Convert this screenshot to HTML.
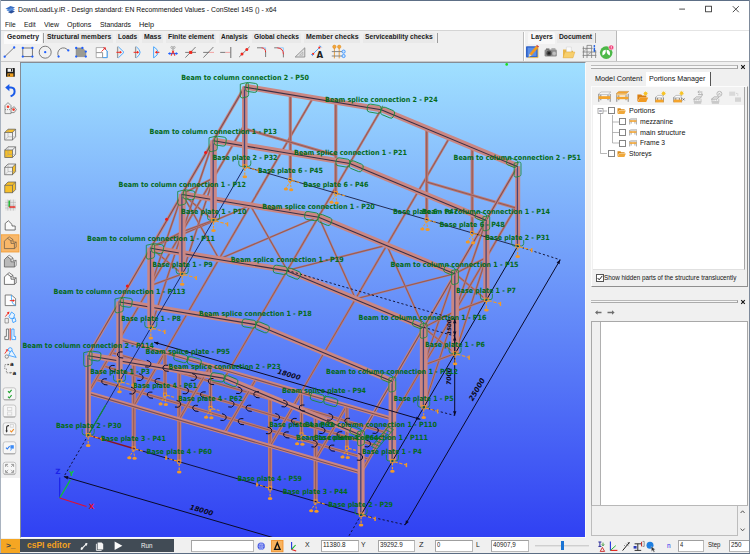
<!DOCTYPE html>
<html lang="en"><head><meta charset="utf-8"><title>ConSteel 14S</title>
<style>
html,body{margin:0;padding:0;background:#f0f0f0;}
body{width:750px;height:554px;overflow:hidden;font-family:"Liberation Sans",sans-serif;}
#app{position:relative;width:750px;height:554px;overflow:hidden;background:#f0f0f0;}
.a{position:absolute;box-sizing:border-box;}
.t{position:absolute;white-space:nowrap;transform-origin:0 50%;display:block;}
svg{position:absolute;display:block;overflow:visible;}
svg text{font-family:"DejaVu Sans","Liberation Sans",sans-serif;}
.inp{position:absolute;box-sizing:border-box;background:#fff;border:1px solid #b9b9b9;border-top-color:#9f9f9f;border-left-color:#a6a6a6;}
#scene{overflow:hidden;}

</style></head>
<body>
<div id="app">
<div class="a" style="left:0px;top:0px;width:750px;height:18px;background:#fff;"></div>
<div class="a" style="left:0px;top:18px;width:750px;height:13px;background:#fff;"></div>
<svg style="left:4.5px;top:5px" width="11" height="9" viewBox="0 0 11 9"><path d="M0.5 3.8 L5.5 1 L10 2.6 L5.2 5.4Z" fill="#3a6fc4"/><path d="M1.5 5.6 L6.2 3 L10 4.6 L5.6 7.2Z" fill="#5d93dd"/><path d="M3 7.2 L6.8 5.2 L10 6.4 L6.2 8.4Z" fill="#2a4f9a"/></svg>
<span class="t " style="left:17.9px;top:5.1px;font-size:7.5px;line-height:9.00px;color:#111;transform:scaleX(0.910);">DownLoadLy.iR - Design standard: EN Recommended Values - ConSteel 14S () - x64</span>
<svg style="left:675px;top:3px" width="70" height="12" viewBox="0 0 70 12"><g stroke="#222" stroke-width="0.8" fill="none"><path d="M4.2 6.1 H10"/><rect x="30.6" y="3.2" width="5.8" height="5.6"/><path d="M57.8 3.2 L63.8 9.2 M63.8 3.2 L57.8 9.2"/></g></svg>
<span class="t " style="left:4.8px;top:19.8px;font-size:7.5px;line-height:9.00px;color:#111;transform:scaleX(0.885);">File</span>
<span class="t " style="left:24.0px;top:19.8px;font-size:7.5px;line-height:9.00px;color:#111;transform:scaleX(0.890);">Edit</span>
<span class="t " style="left:44.0px;top:19.8px;font-size:7.5px;line-height:9.00px;color:#111;transform:scaleX(0.924);">View</span>
<span class="t " style="left:67.2px;top:19.8px;font-size:7.5px;line-height:9.00px;color:#111;transform:scaleX(0.940);">Options</span>
<span class="t " style="left:100.0px;top:19.8px;font-size:7.5px;line-height:9.00px;color:#111;transform:scaleX(0.907);">Standards</span>
<span class="t " style="left:139.0px;top:19.8px;font-size:7.5px;line-height:9.00px;color:#111;transform:scaleX(0.972);">Help</span>
<div class="a" style="left:0px;top:30px;width:617px;height:32px;background:#f0f0f0;border-top:1px solid #d4d4d4;border-bottom:1px solid #c8c8c8;"></div>
<div class="a" style="left:617px;top:30px;width:133px;height:32px;background:#fff;border-top:1px solid #e4e4e4;border-bottom:1px solid #c8c8c8;"></div>
<div class="a" style="left:4px;top:32px;width:37.5px;height:11.5px;background:#fafafa;border-radius:2px 2px 0 0;"></div>
<div class="a" style="left:44.7px;top:32.5px;width:68.3px;height:10.5px;background:#e9e9e9;border-radius:2px 2px 0 0;"></div>
<div class="a" style="left:116.3px;top:32.5px;width:23.000000000000014px;height:10.5px;background:#e9e9e9;border-radius:2px 2px 0 0;"></div>
<div class="a" style="left:142px;top:32.5px;width:21.30000000000001px;height:10.5px;background:#e9e9e9;border-radius:2px 2px 0 0;"></div>
<div class="a" style="left:165.7px;top:32.5px;width:50.0px;height:10.5px;background:#e9e9e9;border-radius:2px 2px 0 0;"></div>
<div class="a" style="left:218.7px;top:32.5px;width:30.600000000000023px;height:10.5px;background:#e9e9e9;border-radius:2px 2px 0 0;"></div>
<div class="a" style="left:252px;top:32.5px;width:49px;height:10.5px;background:#e9e9e9;border-radius:2px 2px 0 0;"></div>
<div class="a" style="left:303.7px;top:32.5px;width:56.60000000000002px;height:10.5px;background:#e9e9e9;border-radius:2px 2px 0 0;"></div>
<div class="a" style="left:363px;top:32.5px;width:71.69999999999999px;height:10.5px;background:#e9e9e9;border-radius:2px 2px 0 0;"></div>
<div class="a" style="left:527.6px;top:32px;width:27.299999999999955px;height:11.5px;background:#f8f8f8;border-radius:2px 2px 0 0;"></div>
<div class="a" style="left:556.6px;top:32.5px;width:37.0px;height:10.5px;background:#e9e9e9;border-radius:2px 2px 0 0;"></div>
<span class="t " style="left:7.3px;top:33.1px;font-size:7.3px;line-height:8.76px;color:#1a1a1a;font-weight:bold;transform:scaleX(0.939);">Geometry</span>
<span class="t " style="left:46.7px;top:33.1px;font-size:7.3px;line-height:8.76px;color:#1a1a1a;font-weight:bold;transform:scaleX(0.932);">Structural members</span>
<span class="t " style="left:118.3px;top:33.1px;font-size:7.3px;line-height:8.76px;color:#1a1a1a;font-weight:bold;transform:scaleX(0.884);">Loads</span>
<span class="t " style="left:144.0px;top:33.1px;font-size:7.3px;line-height:8.76px;color:#1a1a1a;font-weight:bold;transform:scaleX(0.947);">Mass</span>
<span class="t " style="left:167.7px;top:33.1px;font-size:7.3px;line-height:8.76px;color:#1a1a1a;font-weight:bold;transform:scaleX(0.937);">Finite element</span>
<span class="t " style="left:220.7px;top:33.1px;font-size:7.3px;line-height:8.76px;color:#1a1a1a;font-weight:bold;transform:scaleX(0.886);">Analysis</span>
<span class="t " style="left:254.0px;top:33.1px;font-size:7.3px;line-height:8.76px;color:#1a1a1a;font-weight:bold;transform:scaleX(0.909);">Global checks</span>
<span class="t " style="left:305.7px;top:33.1px;font-size:7.3px;line-height:8.76px;color:#1a1a1a;font-weight:bold;transform:scaleX(0.960);">Member checks</span>
<span class="t " style="left:365.0px;top:33.1px;font-size:7.3px;line-height:8.76px;color:#1a1a1a;font-weight:bold;transform:scaleX(0.917);">Serviceability checks</span>
<span class="t " style="left:530.6px;top:33.1px;font-size:7.3px;line-height:8.76px;color:#1a1a1a;font-weight:bold;transform:scaleX(0.926);">Layers</span>
<span class="t " style="left:558.6px;top:33.1px;font-size:7.3px;line-height:8.76px;color:#1a1a1a;font-weight:bold;transform:scaleX(0.925);">Document</span>
<div class="a" style="left:42.8px;top:33px;width:1px;height:10px;background:#9c9c9c;"></div>
<div class="a" style="left:436.7px;top:33px;width:1px;height:10px;background:#9c9c9c;"></div>
<div class="a" style="left:594.7px;top:33px;width:1px;height:10px;background:#9c9c9c;"></div>
<div class="a" style="left:522.5px;top:32px;width:1px;height:29px;background:#bdbdbd;"></div>
<div class="a" style="left:523.5px;top:32px;width:1px;height:29px;background:#fff;"></div>
<div class="a" style="left:616px;top:31px;width:1px;height:30px;background:#b9b9b9;"></div>
<svg style="left:0;top:44px" width="617" height="17" viewBox="0 44 617 17"><path d="M4.7 56.7 L14.2 47.5" stroke="#6f6f6f" stroke-width="0.9"/><circle cx="4.7" cy="56.7" r="1.15" fill="#1f5fff"/><circle cx="14.2" cy="47.5" r="1.15" fill="#1f5fff"/><rect x="22.8" y="48" width="9.6" height="8.6" fill="none" stroke="#6f6f6f" stroke-width="0.9"/><circle cx="22.8" cy="48" r="1.15" fill="#1f5fff"/><circle cx="32.4" cy="48" r="1.15" fill="#1f5fff"/><circle cx="22.8" cy="56.6" r="1.15" fill="#1f5fff"/><circle cx="32.4" cy="56.6" r="1.15" fill="#1f5fff"/><circle cx="45.2" cy="52.2" r="6" fill="none" stroke="#6f6f6f" stroke-width="0.9"/><circle cx="45.2" cy="52.2" r="1.15" fill="#1f5fff"/><path d="M58.6 56.4 A5.6 5.6 0 1 1 68.2 50.6" fill="none" stroke="#6f6f6f" stroke-width="0.9"/><circle cx="58.6" cy="56.6" r="1.15" fill="#1f5fff"/><circle cx="68.3" cy="50.4" r="1.15" fill="#1f5fff"/><path d="M76.2 48 H82.4 L85.8 51.4 V56.6 H76.2Z" fill="#9b9b92" stroke="#777" stroke-width="0.6"/><circle cx="76.2" cy="48" r="1.15" fill="#1f5fff"/><circle cx="82.4" cy="48" r="1.15" fill="#1f5fff"/><circle cx="85.8" cy="51.6" r="1.15" fill="#1f5fff"/><circle cx="76.2" cy="56.6" r="1.15" fill="#1f5fff"/><circle cx="85.8" cy="56.6" r="1.15" fill="#1f5fff"/><path d="M96.2 47.6 H103.5 L107.2 51 V57.6 H96.2Z" fill="#fff" stroke="#9a9a9a" stroke-width="0.8"/><path d="M103.5 47.6 L107.2 51 V57.6 H102.6" fill="none" stroke="#3aa0ff" stroke-width="0.9"/><path d="M96.2 52.6 H102.6 V57.6" fill="none" stroke="#8a8a8a" stroke-width="0.9"/><path d="M101.5 51.5 L105.2 48 M103.3 47.8 H105.4 V49.9" stroke="#f0281e" stroke-width="0.9" fill="none"/><path d="M117.6 46.6 V58" stroke="#9a9a9a" stroke-width="1.3"/><path d="M118.4 46.8 L124 52.3 L118.4 57.8" fill="none" stroke="#3aa0ff" stroke-width="0.9"/><path d="M116.4 52.3 H121" stroke="#f0281e" stroke-width="1"/><path d="M122 52.3 L119.8 50.8 V53.8Z" fill="#f0281e"/><path d="M135.6 46.6 V58" stroke="#9a9a9a" stroke-width="1.3"/><path d="M136.4 46.8 Q143.8 52.3 136.4 57.8" fill="none" stroke="#3aa0ff" stroke-width="0.9"/><path d="M133.6 52.3 H138" stroke="#f0281e" stroke-width="1"/><path d="M139.2 52.3 L137 50.8 V53.8Z" fill="#f0281e"/><path d="M153.6 46.6 V58 M153.8 46.8 Q162.4 52.3 153.8 57.8" fill="none" stroke="#3aa0ff" stroke-width="0.9"/><path d="M156.4 52.3 H159.4" stroke="#f0281e" stroke-width="1"/><path d="M154.8 52.3 L157 50.8 V53.8Z" fill="#f0281e"/><path d="M168.6 53.6 H177.4" stroke="#1f5fff" stroke-width="1.1"/><path d="M168 53.6 L170.2 52.1 V55.1Z M178 53.6 L175.8 52.1 V55.1Z" fill="#1f5fff"/><path d="M171.2 55.8 L173 50.6 L174.8 55.8" fill="none" stroke="#f0281e" stroke-width="1"/><circle cx="171.8" cy="47.4" r="1" fill="none" stroke="#8a8a8a" stroke-width="0.6"/><circle cx="174.2" cy="47.4" r="1" fill="none" stroke="#8a8a8a" stroke-width="0.6"/><path d="M172 48.2 L174 50.6 M174 48.2 L172 50.6" stroke="#8a8a8a" stroke-width="0.6"/><path d="M185.4 57.6 L195.6 47" stroke="#6f6f6f" stroke-width="0.9"/><path d="M185.2 52.4 H196" stroke="#6f6f6f" stroke-width="0.9"/><rect x="189.2" y="50.9" width="3" height="3" fill="#f0281e"/><path d="M203.4 57.6 L213.4 47" stroke="#6f6f6f" stroke-width="0.9"/><path d="M203.2 52.4 H209" stroke="#6f6f6f" stroke-width="0.9"/><path d="M209 52.4 H214" stroke="#f29a9a" stroke-width="0.9"/><path d="M220.2 52.4 H225.4" stroke="#6f6f6f" stroke-width="0.9"/><path d="M225.4 52.4 H230.4" stroke="#f29a9a" stroke-width="0.9"/><path d="M230.8 47 V58" stroke="#6f6f6f" stroke-width="1"/><path d="M239.2 57 L249.7 46.7" stroke="#6f6f6f" stroke-width="0.9"/><circle cx="242" cy="54" r="1.5" fill="#f0281e"/><circle cx="246.8" cy="49.4" r="1.5" fill="#f0281e"/><path d="M257 47.8 H261.6 M265.6 52 V57" stroke="#6f6f6f" stroke-width="0.9"/><path d="M261.6 47.8 H265.6 V52" fill="none" stroke="#7cc4ff" stroke-width="0.8"/><path d="M261.4 47.8 Q265.6 48 265.6 52.2" fill="none" stroke="#f0281e" stroke-width="1"/><path d="M274.2 47.8 H277.4 M283.4 54 V57.4" stroke="#6f6f6f" stroke-width="0.9"/><path d="M277.4 47.8 H283.4 V54" fill="none" stroke="#7cc4ff" stroke-width="0.8"/><path d="M277.2 47.8 Q283.4 48.2 283.4 54.2" fill="none" stroke="#f0281e" stroke-width="1"/><path d="M295.2 57 L304.8 47.8 V57Z" fill="#e4e4e4" stroke="#8a8a8a" stroke-width="0.9"/><path d="M299.6 55.2 L302.8 52 V55.2Z" fill="none" stroke="#9a9a9a" stroke-width="0.6"/><path d="M312 55 L320.6 46.4" stroke="#3aa0ff" stroke-width="0.9"/><path d="M311 54 L313 56 M319.6 45.4 L321.6 47.4" stroke="#3aa0ff" stroke-width="0.8"/><circle cx="313.2" cy="53.8" r="1.1" fill="#f0281e"/><circle cx="319.4" cy="47.6" r="1.1" fill="#f0281e"/><text x="316.6" y="58.2" font-size="8.6" font-weight="bold" fill="#222" font-family="Liberation Sans,sans-serif">A</text><path d="M334.4 48 V58.4 M339.2 48 V58.4" stroke="#e8962a" stroke-width="0.9"/><path d="M331.8 51.6 H342.4 M331.8 56 H342.4" stroke="#7a7a7a" stroke-width="0.9"/><circle cx="334.4" cy="46.8" r="1.7" fill="#f4a63a" stroke="#d9861a" stroke-width="0.5"/><circle cx="339.2" cy="46.8" r="1.7" fill="#f4a63a" stroke="#d9861a" stroke-width="0.5"/><circle cx="343.6" cy="51.6" r="1.6" fill="#cfe6ff" stroke="#2a8aff" stroke-width="0.8"/><circle cx="343.6" cy="56" r="1.6" fill="#cfe6ff" stroke="#2a8aff" stroke-width="0.8"/><rect x="526" y="46.2" width="12" height="11.4" rx="0.8" fill="#2f62c8"/><rect x="527.6" y="47.6" width="8.8" height="8.6" fill="#5b8fe6"/><path d="M528.2 57.6 H538 V48" stroke="#f2c24a" stroke-width="0.9" fill="none"/><path d="M536.2 45.8 L538.4 47.4 L531.6 55.6 L529.4 54Z" fill="#f39a1e"/><path d="M529.4 54 L531.6 55.6 L528.6 57Z" fill="#f6dcae"/><path d="M536.2 45.8 L538.4 47.4 L539 46.4 L537 45Z" fill="#d4342a"/><rect x="544.6" y="49.6" width="12.2" height="6.8" rx="1.2" fill="#8c8c8c"/><rect x="546" y="48.4" width="3.4" height="1.6" fill="#777"/><rect x="551.4" y="48.2" width="4" height="2" fill="#a5a5a5"/><circle cx="549" cy="53.2" r="2.6" fill="#4a4a4a"/><circle cx="549" cy="53.2" r="1.2" fill="#222"/><circle cx="554.2" cy="53.4" r="2" fill="#c2c2c2" stroke="#9a9a9a" stroke-width="0.5"/><path d="M563 49.6 H566.6 L567.6 50.8 H573 V57.6 H563Z" fill="#e8b64a"/><path d="M566.4 47 H571.4 V52 H566.4Z" fill="#fafafa" stroke="#c8c8c8" stroke-width="0.4"/><path d="M564.8 52 H574.8 L573 57.8 H563Z" fill="#f7cf6c" stroke="#e2a93a" stroke-width="0.5"/><g stroke="#7d7d7d" stroke-width="0.8" fill="none"><path d="M583.4 46.4 V58 M587 45.2 V58 M591.6 45.2 V58 M595.6 50 V58"/><path d="M582.6 48.4 H592.6 M582.6 52 H596.4 M582.6 55.4 H596.4 M587 45.4 H591.6"/><path d="M583.4 52 L587 48.4 M587 55.4 L591.6 52" stroke-width="0.6"/></g><rect x="593.6" y="47.6" width="1.5" height="4.2" fill="#1c5ee0"/><circle cx="594.35" cy="46" r="0.9" fill="#1c5ee0"/><circle cx="606.2" cy="52.6" r="6.3" fill="#4cb848"/><path d="M602.6 55.6 C601.8 51.6 603.2 50 605.8 49.8 C606 52.4 605.4 54.6 602.6 55.6Z M609.8 55.6 C610.6 51.6 609.2 50 606.6 49.8 C606.4 52.4 607 54.6 609.8 55.6Z" fill="#fff"/><circle cx="611.2" cy="47.4" r="2.5" fill="#f0407a" stroke="#fff" stroke-width="0.5"/><rect x="610.85" y="45.8" width="0.7" height="2.2" fill="#fff"/><rect x="610.85" y="48.4" width="0.7" height="0.7" fill="#fff"/></svg>
<div class="a" style="left:0px;top:62px;width:20px;height:416px;background:#f0f0f0;"></div>
<div class="a" style="left:0px;top:478px;width:20px;height:60px;background:#fff;border-left:1px solid #dcdcdc;"></div>
<svg style="left:0;top:62px" width="20" height="416" viewBox="0 62 20 416"><rect x="1" y="234.8" width="18" height="17.2" fill="#f8b769" stroke="#f39a2e" stroke-width="0.8"/><rect x="6" y="68" width="8.8" height="8.8" rx="0.6" fill="#1c1c1c"/><rect x="7.6" y="68.6" width="5.4" height="3.2" fill="#f4f4f4"/><rect x="11" y="69" width="1.2" height="2.4" fill="#1c1c1c"/><rect x="7.4" y="73.4" width="6" height="3.4" fill="#f0a020"/><rect x="8.4" y="74.4" width="1.6" height="1.4" fill="#1c1c1c"/><path d="M8.6 87.6 H11 Q14.6 87.8 14.6 91.4 Q14.6 95 10.6 96.2" fill="none" stroke="#1a5ae8" stroke-width="2"/><path d="M5.2 87.6 L9.4 84 V91.2Z" fill="#1a5ae8"/><g fill="none" stroke="#6a6a6a" stroke-width="0.7"><path d="M5 105.6 L8 102.6 L11 105.6 V113.6 H5Z M11 109 L14.2 106.6 L16.4 109.6 L14.2 112.6 H11"/><path d="M5 109.6 H11" stroke-dasharray="1 1"/></g><circle cx="8" cy="106.8" r="1.3" fill="#f03a2a"/><circle cx="13.6" cy="109.6" r="1.3" fill="#f03a2a"/><path d="M4.799999999999999 132.4 l3.2 -3.2 h7.6 l-3.2 3.2z" fill="#f6bf2a"/><g fill="none" stroke="#5a5a5a" stroke-width="0.7"><rect x="4.799999999999999" y="132.4" width="7.6" height="7.6"/><path d="M4.799999999999999 132.4 l3.2 -3.2 h7.6 v7.6 l-3.2 3.2 M12.399999999999999 132.4 l3.2 -3.2"/><path d="M7.999999999999999 129.20000000000002 v7.6 h7.6 M4.799999999999999 140.0 l3.2 -3.2" stroke="#9a9a9a" stroke-width="0.5"/></g><rect x="4.799999999999999" y="150.0" width="7.6" height="7.6" fill="#f6bf2a"/><g fill="none" stroke="#5a5a5a" stroke-width="0.7"><rect x="4.799999999999999" y="150.0" width="7.6" height="7.6"/><path d="M4.799999999999999 150.0 l3.2 -3.2 h7.6 v7.6 l-3.2 3.2 M12.399999999999999 150.0 l3.2 -3.2"/><path d="M7.999999999999999 146.8 v7.6 h7.6 M4.799999999999999 157.6 l3.2 -3.2" stroke="#9a9a9a" stroke-width="0.5"/></g><path d="M12.399999999999999 167.20000000000002 l3.2 -3.2 v7.6 l-3.2 3.2z" fill="#f6bf2a"/><g fill="none" stroke="#5a5a5a" stroke-width="0.7"><rect x="4.799999999999999" y="167.20000000000002" width="7.6" height="7.6"/><path d="M4.799999999999999 167.20000000000002 l3.2 -3.2 h7.6 v7.6 l-3.2 3.2 M12.399999999999999 167.20000000000002 l3.2 -3.2"/><path d="M7.999999999999999 164.00000000000003 v7.6 h7.6 M4.799999999999999 174.8 l3.2 -3.2" stroke="#9a9a9a" stroke-width="0.5"/></g><path d="M4.799999999999999 185.20000000000002 l3.2 -3.2 h7.6 l-3.2 3.2z" fill="#f6bf2a"/><rect x="4.799999999999999" y="185.20000000000002" width="7.6" height="7.6" fill="#f6bf2a"/><path d="M12.399999999999999 185.20000000000002 l3.2 -3.2 v7.6 l-3.2 3.2z" fill="#f6bf2a"/><g fill="none" stroke="#5a5a5a" stroke-width="0.7"><rect x="4.799999999999999" y="185.20000000000002" width="7.6" height="7.6"/><path d="M4.799999999999999 185.20000000000002 l3.2 -3.2 h7.6 v7.6 l-3.2 3.2 M12.399999999999999 185.20000000000002 l3.2 -3.2"/></g><rect x="5" y="199.6" width="11" height="11" fill="#e6e6e6"/><g stroke="#a9a9a9" stroke-width="0.5"><path d="M5 202.4 H16 M5 205.2 H16 M5 208 H16 M7.8 199.6 V210.6 M10.6 199.6 V210.6 M13.4 199.6 V210.6"/></g><path d="M9.2 200.4 V207" stroke="#12b428" stroke-width="1.4"/><path d="M9.2 207 H15.4" stroke="#e8221a" stroke-width="1.4"/><path d="M5.2 230 V223.4 L8.4 220.8 L12 224.4 V226 H15.2 V230Z" fill="#fafafa" stroke="#4a4a4a" stroke-width="0.75"/><path d="M4.3999999999999995 248.6 v-7.4 l3 -3 l3.6 2.8 v2.4 h3.4 v5.2z" fill="none" stroke="#6a5a48" stroke-width="0.75"/><path d="M7.3999999999999995 238.2 l1.8 -1.4 l3.8 2.8 v2.4 h3.2 v5.2 l-1.8 1.4 M11.0 241.0 l2 -1.4 M14.399999999999999 243.4 l1.8 -1.4" fill="none" stroke="#6a5a48" stroke-width="0.65"/><path d="M4.3999999999999995 267 v-7.4 l3 -3 l3.6 2.8 v2.4 h3.4 v5.2z" fill="#b9b9b9" stroke="#5a5a5a" stroke-width="0.75"/><path d="M7.3999999999999995 256.6 l1.8 -1.4 l3.8 2.8 v2.4 h3.2 v5.2 l-1.8 1.4 M11.0 259.4 l2 -1.4 M14.399999999999999 261.8 l1.8 -1.4" fill="none" stroke="#5a5a5a" stroke-width="0.65"/><path d="M4.3999999999999995 284.4 v-7.4 l3 -3 l3.6 2.8 v2.4 h3.4 v5.2z" fill="#fdfdfd" stroke="#4a4a4a" stroke-width="0.75"/><path d="M7.3999999999999995 274.0 l1.8 -1.4 l3.8 2.8 v2.4 h3.2 v5.2 l-1.8 1.4 M11.0 276.79999999999995 l2 -1.4 M14.399999999999999 279.2 l1.8 -1.4" fill="none" stroke="#4a4a4a" stroke-width="0.65"/><path d="M5.2 295 H11.4 L15.6 298.6 V305.6 H5.2Z" fill="#fdfdfd" stroke="#5a5a5a" stroke-width="0.75"/><path d="M11.4 295 V297.4 Q11.6 304.4 15.6 305.4" fill="none" stroke="#2aa0ff" stroke-width="0.8"/><path d="M9.8 300.6 H13.6" stroke="#f0281e" stroke-width="0.9"/><path d="M15 300.6 L12.8 299.2 V302Z" fill="#f0281e"/><path d="M5 323 V318.4 H8.4 V323Z" fill="none" stroke="#7a7a7a" stroke-width="0.7"/><path d="M9 316.6 L11.6 312 L14.6 314.4 L13.6 318.4 H10.4Z M12 319.4 L14.8 317.6 L16 321.2 L13 322.6Z" fill="#e8f4ff" stroke="#2a96ff" stroke-width="0.8"/><path d="M5.4 316.6 L8.6 312.6" stroke="#f0281e" stroke-width="0.9"/><path d="M9.4 311.6 L6.8 312.4 L8.8 314.4Z" fill="#f0281e"/><path d="M8.6 329 V339.6 H4.8 V336.4 H6.4 V329Z" fill="#f4f4f4" stroke="#5a5a5a" stroke-width="0.75"/><path d="M11.8 329 V339.6 H15.6 V336.4 H14 V329Z" fill="#eaf5ff" stroke="#2a96ff" stroke-width="0.8"/><path d="M10.2 328.2 V340.4" stroke="#f0381e" stroke-width="1"/><path d="M8.6 355.4 L11.4 349.8 L16.2 357.4Z" fill="#eaf5ff" stroke="#2a96ff" stroke-width="0.8"/><circle cx="10.2" cy="349.6" r="1.9" fill="#eaf5ff" stroke="#2a96ff" stroke-width="0.8"/><circle cx="6.8" cy="356.6" r="1.7" fill="#f4f4f4" stroke="#6a6a6a" stroke-width="0.7"/><path d="M4.8 353.6 L7.2 350.2" stroke="#f0281e" stroke-width="0.9"/><path d="M8 349 L5.6 349.8 L7.4 351.6Z" fill="#f0281e"/><path d="M4.8 369 V364.6 H8.4 M6.4 368.6 V372.8 H11" fill="none" stroke="#6a6a6a" stroke-width="0.7" stroke-dasharray="1.4 0.8"/><path d="M9.4 364.6 L7.8 363.6 V365.6Z M12 372.8 L10.4 371.8 V373.8Z" fill="#555"/><g font-family="Liberation Sans,sans-serif" font-size="5.6" font-weight="bold" fill="#222"><text x="10" y="366.4">a</text><text x="12.6" y="374.8">a</text></g><rect x="3.1999999999999993" y="387.8" width="12.6" height="12.4" rx="2.2" fill="#f6f6f6" stroke="#b9b9b9" stroke-width="0.8"/><path d="M4.0 399.6 h11 " stroke="#9d9d9d" stroke-width="0.8"/><path d="M8.0 391.2 l1.3 1.4 l2.3 -2.8" fill="none" stroke="#1ca02c" stroke-width="1.1"/><path d="M8.0 396.6 l1.3 1.4 l2.3 -2.8" fill="none" stroke="#1ca02c" stroke-width="1.1"/><rect x="3.1999999999999993" y="405.0" width="12.6" height="12.4" rx="2.2" fill="#f6f6f6" stroke="#b9b9b9" stroke-width="0.8"/><path d="M4.0 416.8 h11 " stroke="#9d9d9d" stroke-width="0.8"/><g fill="none" stroke="#d4d4d4" stroke-width="0.8"><rect x="7.4" y="407.4" width="4.4" height="3"/><rect x="7.4" y="412" width="4.4" height="3"/></g><rect x="3.1999999999999993" y="422.8" width="12.6" height="12.4" rx="2.2" fill="#f6f6f6" stroke="#b9b9b9" stroke-width="0.8"/><path d="M4.0 434.6 h11 " stroke="#9d9d9d" stroke-width="0.8"/><path d="M6.6 432 V427.6 Q6.8 425.4 9 425.6" fill="none" stroke="#333" stroke-width="1.1"/><path d="M5.4 430.6 L6.6 432.8 L7.8 430.6Z" fill="#333"/><rect x="10.2" y="424.6" width="3.2" height="2.6" fill="none" stroke="#cfcfcf" stroke-width="0.7"/><path d="M10.200000000000001 430.6 l1.3 1.4 l2.3 -2.8" fill="none" stroke="#f08a1e" stroke-width="1.1"/><rect x="3.1999999999999993" y="441.8" width="12.6" height="12.4" rx="2.2" fill="#f6f6f6" stroke="#b9b9b9" stroke-width="0.8"/><path d="M4.0 453.6 h11 " stroke="#9d9d9d" stroke-width="0.8"/><path d="M6.0 447.6 l1.3 1.4 l2.3 -2.8" fill="none" stroke="#2a7af0" stroke-width="1.1"/><rect x="10.4" y="445.2" width="3.4" height="3.4" fill="#3a8af6"/><path d="M10.6 450.6 l1 -2" stroke="#3a8af6" stroke-width="0.8"/><rect x="3.1999999999999993" y="462.2" width="12.6" height="12.4" rx="2.2" fill="#f6f6f6" stroke="#b9b9b9" stroke-width="0.8"/><path d="M4.0 474.0 h11 " stroke="#9d9d9d" stroke-width="0.8"/><g fill="none" stroke="#8d8d8d" stroke-width="0.9"><path d="M5.6 466.8 V464.4 H8 M11.2 464.4 H13.6 V466.8 M13.6 470 V472.4 H11.2 M8 472.4 H5.6 V470"/><path d="M5.8 464.6 L8.2 467 M13.4 464.6 L11 467 M13.4 472.2 L11 469.8 M5.8 472.2 L8.2 469.8" stroke-width="0.7"/></g></svg>
<div class="a" style="left:20px;top:62px;width:566px;height:476px;background:#fff;border-left:1px solid #868c94;border-top:1px solid #868c94;border-right:1px solid #fafafa;border-bottom:1px solid #fafafa;"></div>
<div class="a" style="left:586px;top:62px;width:164px;height:476px;background:#f0f0f0;"></div>
<div class="a" style="left:591px;top:65.2px;width:147px;height:3.6px;background:#f6f6f6;border-top:1px solid #b9b9b9;border-bottom:1px solid #ababab;border-right:1px solid #9a9a9a;"></div>
<svg style="left:740px;top:63.5px" width="6" height="6" viewBox="0 0 6 6"><path d="M1.2 1.2 L4.8 4.8 M4.8 1.2 L1.2 4.8" stroke="#111" stroke-width="1.1"/></svg>
<div class="a" style="left:646px;top:72px;width:65px;height:15px;background:#fff;border-right:1px solid #555;"></div>
<span class="t " style="left:594.8px;top:74.7px;font-size:6.9px;line-height:8.28px;color:#111;transform:scaleX(1.052);">Model Content</span>
<span class="t " style="left:648.5px;top:74.7px;font-size:6.9px;line-height:8.28px;color:#111;transform:scaleX(1.037);">Portions Manager</span>
<div class="a" style="left:591px;top:86px;width:157px;height:201px;background:#f0f0f0;border:1px solid #fcfcfc;border-right:1px solid #8f8f8f;border-bottom:1px solid #8f8f8f;"></div>
<div class="a" style="left:593px;top:87px;width:152px;height:183px;background:#fff;border-right:1px solid #a5a5a5;border-bottom:1px solid #e0e0e0;"></div>
<div class="a" style="left:593px;top:87px;width:151px;height:18.3px;background:#f2f2f2;"></div>
<svg style="left:593px;top:87px" width="152" height="18" viewBox="593 87 152 18"><path d="M598.8000000000001 101.8 V94.0 M610.2 101.8 V94.0 M600.8000000000001 100.2 V94.6 M608.0000000000001 100.2 V94.6" stroke="#7b7b7b" stroke-width="0.9" fill="none"/><path d="M598.2 94.39999999999999 L601.0 92.0 H610.8000000000001 L608.2 94.39999999999999Z" fill="#fbfbfb" stroke="#8e8e8e" stroke-width="0.5"/><rect x="598.6" y="96.19999999999999" width="11.799999999999999" height="2.8" fill="#f4a42c"/><path d="M616.8000000000001 101.80000000000001 V93.80000000000001 M628.2 101.80000000000001 V93.80000000000001 M618.8000000000001 100.20000000000002 V94.4 M626.0000000000001 100.20000000000002 V94.4" stroke="#7b7b7b" stroke-width="0.9" fill="none"/><path d="M616.2 93.60000000000001 L618.8000000000001 91.4 H628.8000000000001 L626.4000000000001 93.60000000000001Z" fill="#f4a42c" stroke="#c07a16" stroke-width="0.4"/><rect x="616.6" y="93.80000000000001" width="9.6" height="1.6" fill="#f9c978"/><rect x="616.6" y="96.80000000000001" width="11.799999999999999" height="2.4" fill="#f4a42c"/><path d="M637.4 94.4 H641.2 L642.2 95.6 H646.4 V97.4 H639.6 L637.4 101.8Z" fill="#d97f12"/><path d="M639.8 97.4 H648.2 L646.2 102 H637.6Z" fill="#f19a22"/><polygon points="648.30,93.60 646.85,94.12 647.51,95.51 646.12,94.85 645.60,96.30 645.08,94.85 643.69,95.51 644.35,94.12 642.90,93.60 644.35,93.08 643.69,91.69 645.08,92.35 645.60,90.90 646.12,92.35 647.51,91.69 646.85,93.08" fill="#f7c325"/><path d="M655.6 102.2 V97.4 M663.4 102.2 V97.4 M657.6 100.60000000000001 V98 M661.2 100.60000000000001 V98" stroke="#7b7b7b" stroke-width="0.9" fill="none"/><path d="M655 97.8 L657.8 95.4 H664 L661.4 97.8Z" fill="#fbfbfb" stroke="#8e8e8e" stroke-width="0.5"/><rect x="655.4" y="99.6" width="8.2" height="2.8" fill="#f4a42c"/><polygon points="666.30,93.40 664.85,93.92 665.51,95.31 664.12,94.65 663.60,96.10 663.08,94.65 661.69,95.31 662.35,93.92 660.90,93.40 662.35,92.88 661.69,91.49 663.08,92.15 663.60,90.70 664.12,92.15 665.51,91.49 664.85,92.88" fill="#f7c325"/><path d="M673.8000000000001 102.2 V97.4 M681.6 102.2 V97.4 M675.8000000000001 100.60000000000001 V98 M679.4000000000001 100.60000000000001 V98" stroke="#7b7b7b" stroke-width="0.9" fill="none"/><path d="M673.2 97.8 L676.0 95.4 H682.2 L679.6 97.8Z" fill="#fbfbfb" stroke="#8e8e8e" stroke-width="0.5"/><rect x="673.6" y="99.6" width="8.2" height="2.8" fill="#f4a42c"/><polygon points="684.30,93.20 682.85,93.72 683.51,95.11 682.12,94.45 681.60,95.90 681.08,94.45 679.69,95.11 680.35,93.72 678.90,93.20 680.35,92.68 679.69,91.29 681.08,91.95 681.60,90.50 682.12,91.95 683.51,91.29 682.85,92.68" fill="#f7c325"/><path d="M682.6 98.4 l2 2 m0 -2 l-2 2" stroke="#555" stroke-width="0.7"/><path d="M694.2 102.2 V98.80000000000001 M701.0 102.2 V98.80000000000001 M696.2 100.60000000000001 V99.4 M698.8000000000001 100.60000000000001 V99.4" stroke="#bdbdbd" stroke-width="0.9" fill="none"/><path d="M693.6 99.2 L696.4 96.80000000000001 H701.6 L699.0 99.2Z" fill="#e2e2e2" stroke="#8e8e8e" stroke-width="0.5"/><rect x="694.0" y="101.0" width="7.2" height="2.8" fill="#c9c9c9"/><path d="M698 94.6 h4.6 m-1.4 -1.6 l1.8 1.6 l-1.8 1.6 M702.4 92 h-4.4 m1.4 -1.4 l-1.6 1.4 l1.6 1.4" fill="none" stroke="#b4b4b4" stroke-width="1"/><path d="M712.0 102.2 V98.80000000000001 M718.8 102.2 V98.80000000000001 M714.0 100.60000000000001 V99.4 M716.6 100.60000000000001 V99.4" stroke="#bdbdbd" stroke-width="0.9" fill="none"/><path d="M711.4 99.2 L714.1999999999999 96.80000000000001 H719.4 L716.8 99.2Z" fill="#e2e2e2" stroke="#8e8e8e" stroke-width="0.5"/><rect x="711.8" y="101.0" width="7.2" height="2.8" fill="#c9c9c9"/><circle cx="719.4" cy="93.8" r="2.5" fill="#f4f4f4" stroke="#b4b4b4" stroke-width="0.9"/><path d="M718.2 92.6 l2.4 2.4 m0 -2.4 l-2.4 2.4" stroke="#b4b4b4" stroke-width="0.8"/><rect x="729.2" y="91.6" width="6" height="4.2" fill="#d9d9d9"/><rect x="735" y="97.4" width="6" height="4.4" fill="#d4d4d4"/><path d="M736.2 93.4 h1.6 v2.6" fill="none" stroke="#c2c2c2" stroke-width="0.8" stroke-dasharray="1 0.8"/></svg>
<svg style="left:593px;top:104px" width="60" height="56" viewBox="593 104 60 56"><g stroke="#9a9a9a" stroke-width="0.7" fill="none"><path d="M600.5 113.5 V153.5 H607 M602.5 111 H607 M612.5 115 V143 H620 M612.5 122 H620 M612.5 132.5 H620"/></g><rect x="598" y="108.5" width="5" height="5" fill="#fff" stroke="#8a8a8a" stroke-width="0.7"/><path d="M599.2 111 H601.8" stroke="#335" stroke-width="0.7"/></svg>
<div class="a" style="left:607.5px;top:107.4px;width:7px;height:7px;background:#fff;border:1px solid #858585;"></div>
<svg style="left:617.0px;top:107.4px" width="9" height="8" viewBox="0 0 9 8"><path d="M0.5 1.2 H3.4 L4.2 2.2 H7.6 V3.2 H2 L0.5 6.8Z" fill="#d98a1a"/><path d="M2.2 3.4 H8.8 L7.4 7 H0.6Z" fill="#f0a83a"/></svg>
<span class="t " style="left:628.7px;top:107.1px;font-size:6.9px;line-height:8.28px;color:#111;transform:scaleX(1.031);">Portions</span>
<div class="a" style="left:619px;top:118.2px;width:7px;height:7px;background:#fff;border:1px solid #858585;"></div>
<svg style="left:628.5px;top:118.39999999999999px" width="8.1" height="6.8" viewBox="0 0 13 11"><g fill="none" stroke="#7a7a7a" stroke-width="1"><path d="M1 10.5 V2 M12 10.5 V2 M3.5 9 V4 M9.5 9 V4"/></g><path d="M0.5 2.5 L3 0.8 H12.5 L10 2.5Z" fill="#e9e9e9" stroke="#8a8a8a" stroke-width="0.6"/><rect x="1" y="3.6" width="11" height="2.6" fill="#f2a532"/></svg>
<span class="t " style="left:640.0px;top:117.9px;font-size:6.9px;line-height:8.28px;color:#111;transform:scaleX(0.989);">mezzanine</span>
<div class="a" style="left:619px;top:128.9px;width:7px;height:7px;background:#fff;border:1px solid #858585;"></div>
<svg style="left:628.5px;top:129.1px" width="8.1" height="6.8" viewBox="0 0 13 11"><g fill="none" stroke="#7a7a7a" stroke-width="1"><path d="M1 10.5 V2 M12 10.5 V2 M3.5 9 V4 M9.5 9 V4"/></g><path d="M0.5 2.5 L3 0.8 H12.5 L10 2.5Z" fill="#e9e9e9" stroke="#8a8a8a" stroke-width="0.6"/><rect x="1" y="3.6" width="11" height="2.6" fill="#f2a532"/></svg>
<span class="t " style="left:640.0px;top:128.6px;font-size:6.9px;line-height:8.28px;color:#111;transform:scaleX(1.039);">main structure</span>
<div class="a" style="left:619px;top:139.6px;width:7px;height:7px;background:#fff;border:1px solid #858585;"></div>
<svg style="left:628.5px;top:139.79999999999998px" width="8.1" height="6.8" viewBox="0 0 13 11"><g fill="none" stroke="#7a7a7a" stroke-width="1"><path d="M1 10.5 V2 M12 10.5 V2 M3.5 9 V4 M9.5 9 V4"/></g><path d="M0.5 2.5 L3 0.8 H12.5 L10 2.5Z" fill="#e9e9e9" stroke="#8a8a8a" stroke-width="0.6"/><rect x="1" y="3.6" width="11" height="2.6" fill="#f2a532"/></svg>
<span class="t " style="left:640.0px;top:139.3px;font-size:6.9px;line-height:8.28px;color:#111;transform:scaleX(0.973);">Frame 3</span>
<div class="a" style="left:607.5px;top:150.0px;width:7px;height:7px;background:#fff;border:1px solid #858585;"></div>
<svg style="left:617.0px;top:150.0px" width="9" height="8" viewBox="0 0 9 8"><path d="M0.5 1.2 H3.4 L4.2 2.2 H7.6 V3.2 H2 L0.5 6.8Z" fill="#d98a1a"/><path d="M2.2 3.4 H8.8 L7.4 7 H0.6Z" fill="#f0a83a"/></svg>
<span class="t " style="left:628.7px;top:149.7px;font-size:6.9px;line-height:8.28px;color:#111;transform:scaleX(0.970);">Storeys</span>
<div class="a" style="left:596px;top:274px;width:7.5px;height:7.5px;background:#fff;border:1px solid #555;"></div>
<svg style="left:596px;top:274px" width="8" height="8" viewBox="0 0 8 8"><path d="M1.6 4 L3.2 5.8 L6.3 1.9" fill="none" stroke="#222" stroke-width="1"/></svg>
<span class="t " style="left:603.5px;top:274.1px;font-size:6.9px;line-height:8.28px;color:#111;transform:scaleX(0.909);">Show hidden parts of the structure translucently</span>
<div class="a" style="left:591px;top:299.6px;width:147px;height:3.6px;background:#f6f6f6;border-top:1px solid #b9b9b9;border-bottom:1px solid #ababab;border-right:1px solid #9a9a9a;"></div>
<svg style="left:740px;top:298.5px" width="6" height="6" viewBox="0 0 6 6"><path d="M1.2 1.2 L4.8 4.8 M4.8 1.2 L1.2 4.8" stroke="#111" stroke-width="1.1"/></svg>
<svg style="left:594px;top:308px" width="26" height="9" viewBox="0 0 26 9"><g stroke="#6e6e6e" stroke-width="1.3" fill="#6e6e6e"><path d="M2 4.5 H7.5 M13.5 4.5 H19"/><path d="M1 4.5 L3.6 2.3 V6.7Z M20.6 4.5 L18 2.3 V6.7Z" stroke="none"/></g></svg>
<div class="a" style="left:591px;top:321px;width:157px;height:185px;background:#fff;border:1px solid #a8a8a8;border-bottom:1px solid #b8b8b8;"></div>
<div class="a" style="left:592px;top:322px;width:8.5px;height:183px;background:#f0f0f0;border-right:1px solid #b0b0b0;"></div>
<div class="a" style="left:591px;top:506px;width:147px;height:29.5px;background:#f0f0f0;border:1px solid #bdbdbd;border-top:none;"></div>
<svg style="left:738px;top:506px" width="10" height="30" viewBox="0 0 10 30"><path d="M2.6 7 L4.6 4.8 L6.6 7 M2.6 22.6 L4.6 24.8 L6.6 22.6" fill="none" stroke="#444" stroke-width="0.9"/></svg>
<div class="a" style="left:0px;top:538px;width:750px;height:15px;background:#f0f0f0;"></div>
<div class="a" style="left:0px;top:539px;width:20px;height:13.5px;background:#f5a623;"></div>
<div class="a" style="left:20px;top:539px;width:153.5px;height:13px;background:#414b55;"></div>
<span class="t " style="left:5.5px;top:541.1px;font-size:7.5px;line-height:9.00px;color:#3a3f45;font-weight:bold;transform:scaleX(1.111);">&gt;_</span>
<span class="t " style="left:27.0px;top:541.1px;font-size:8.2px;line-height:9.84px;color:#f5a21e;font-weight:bold;transform:scaleX(1.038);">csPI editor</span>
<svg style="left:0;top:539px" width="174" height="14" viewBox="0 539 174 14"><path d="M81 549.4 L87 543.4" stroke="#f4f4f4" stroke-width="1.2"/><path d="M81 549.4 l0.6 -2 l1.4 1.4z M87 543.4 l-0.6 2 l-1.4 -1.4z" fill="#f4f4f4" stroke="#f4f4f4" stroke-width="0.8"/><path d="M97.6 542.4 h4 l1.6 1.6 v5.6 h-5.6z" fill="#f4f4f4"/><path d="M96.4 543.8 v6.6 h5.2" fill="none" stroke="#f4f4f4" stroke-width="0.9"/><path d="M114.6 541.6 L122.4 545.8 L114.6 550Z" fill="#fafafa"/></svg>
<span class="t " style="left:141.0px;top:541.6px;font-size:6.6px;line-height:7.92px;color:#f2f2f2;transform:scaleX(0.950);">Run</span>
<div class="inp" style="left:191px;top:540px;width:62.5px;height:11.5px"></div>
<svg style="left:255px;top:539px" width="410" height="14" viewBox="255 539 410 14"><circle cx="261.2" cy="546.2" r="3.6" fill="#3b4fe0"/><path d="M257.8 546.2 h6.8 M261.2 542.8 v6.8 M258.6 544 q2.6 1.4 5.2 0 M258.6 548.4 q2.6 -1.4 5.2 0" stroke="#c8d0ff" stroke-width="0.5" fill="none"/><ellipse cx="261.2" cy="546.2" rx="1.6" ry="3.5" fill="none" stroke="#c8d0ff" stroke-width="0.5"/><rect x="271.6" y="540.4" width="11.4" height="11.4" fill="#f8b35e" stroke="#f08a1e" stroke-width="0.8"/><path d="M274.6 549.4 L277.3 542.8 L280 549.4Z" fill="none" stroke="#111" stroke-width="1.4"/><path d="M291.6 542 V549.4" stroke="#2233dd" stroke-width="1.1"/><path d="M291.6 549.4 L296.2 551" stroke="#e0201a" stroke-width="1.1"/><path d="M291.6 549.4 L295.6 545" stroke="#14b02a" stroke-width="1.1"/><path d="M598.4 542 h3 m-1.5 0 v4.4 m-1.5 0 h3" stroke="#2a2a99" stroke-width="1" fill="none"/><path d="M600.2 551.4 l2.2 -4 l2.2 4z" fill="none" stroke="#c22" stroke-width="0.9"/><path d="M603 542.6 v3 m-1.2 -1.2 l1.2 1.4 l1.2 -1.4" stroke="#2a8a2a" stroke-width="0.8" fill="none"/><path d="M610.4 541.6 V550.4" stroke="#2233dd" stroke-width="1.1"/><path d="M610.4 550.4 H617.4" stroke="#e0201a" stroke-width="1.1"/><path d="M610.4 550.4 L615.8 545.6" stroke="#14b02a" stroke-width="0.9"/><path d="M622.6 550.6 L629.4 542.4" stroke="#222" stroke-width="1"/><path d="M624 545 l1.6 1.6 M626 543.6 l2.6 2.6" stroke="#666" stroke-width="0.7"/><path d="M629.6 542.2 l-2.2 .6 l1.6 1.6z" fill="#222"/><path d="M634.6 543.8 h6.6 M634.6 550.4 h6.6 M637.8 543.8 v6.6" stroke="#333" stroke-width="1"/><path d="M633.6 546 h3 v2.6 h-3z" fill="#2a3ab8"/><path d="M641.6 541.8 v4.6" stroke="#b22" stroke-width="1"/><path d="M642.6 541.4 h1.6 v5 h-1.6" fill="none" stroke="#555" stroke-width="0.6"/><circle cx="650" cy="545.2" r="3.5" fill="#1f7fe0"/><path d="M651.2 546.4 l0.4 5 l1.2 -1.2 l1 2 l.9 -.5 l-1 -1.9 l1.6 -.3z" fill="#333" stroke="#eee" stroke-width="0.3"/></svg>
<span class="t " style="left:305.2px;top:540.6px;font-size:7.3px;line-height:8.76px;color:#222;transform:scaleX(0.945);">X</span>
<div class="inp" style="left:321px;top:540px;width:37.5px;height:11.5px"></div>
<span class="t " style="left:323.0px;top:541.2px;font-size:6.8px;line-height:8.16px;color:#222;transform:scaleX(0.935);">11380.8</span>
<span class="t " style="left:361.4px;top:540.6px;font-size:7.3px;line-height:8.76px;color:#222;transform:scaleX(0.945);">Y</span>
<div class="inp" style="left:378px;top:540px;width:37px;height:11.5px"></div>
<span class="t " style="left:380.0px;top:541.2px;font-size:6.8px;line-height:8.16px;color:#222;transform:scaleX(0.928);">39292.9</span>
<span class="t " style="left:418.6px;top:540.6px;font-size:7.3px;line-height:8.76px;color:#222;transform:scaleX(1.032);">Z</span>
<div class="inp" style="left:435px;top:540px;width:37.5px;height:11.5px"></div>
<span class="t " style="left:437.0px;top:541.2px;font-size:6.8px;line-height:8.16px;color:#222;transform:scaleX(0.846);">0</span>
<span class="t " style="left:476.0px;top:540.6px;font-size:7.3px;line-height:8.76px;color:#222;transform:scaleX(0.936);">L</span>
<div class="inp" style="left:491px;top:540px;width:37.5px;height:11.5px"></div>
<span class="t " style="left:493.0px;top:541.2px;font-size:6.8px;line-height:8.16px;color:#222;transform:scaleX(0.928);">40907,9</span>
<div class="a" style="left:535px;top:544.5px;width:53.5px;height:2px;background:#e2e2e2;border-top:1px solid #cfcfcf;"></div>
<div class="a" style="left:560.6px;top:540.8px;width:3.8px;height:9.4px;background:#1a74d4;"></div>
<span class="t " style="left:667.0px;top:541.5px;font-size:6.9px;line-height:8.28px;color:#2222ee;transform:scaleX(0.938);">n</span>
<div class="inp" style="left:678px;top:540px;width:25.5px;height:11.5px"></div>
<span class="t " style="left:680.0px;top:541.2px;font-size:6.8px;line-height:8.16px;color:#222;transform:scaleX(0.846);">4</span>
<span class="t " style="left:707.5px;top:541.1px;font-size:6.9px;line-height:8.28px;color:#222;transform:scaleX(0.881);">Step</span>
<div class="inp" style="left:729px;top:540px;width:21px;height:11.5px;border-right:none"></div>
<span class="t " style="left:731.0px;top:541.2px;font-size:6.8px;line-height:8.16px;color:#222;transform:scaleX(0.925);">250</span>
<div class="a" style="left:0px;top:0px;width:750px;height:1px;background:#5d6f86;"></div>
<div class="a" style="left:749px;top:0px;width:1px;height:554px;background:#7d8a9b;"></div>
<div class="a" style="left:0px;top:0px;width:1px;height:554px;background:#a9b3c0;"></div>
<div class="a" style="left:0px;top:553px;width:750px;height:1px;background:#5b6d84;"></div>
<svg id="scene" style="left:21px;top:63px" width="564" height="474" viewBox="21 63 564 474"><defs><linearGradient id="sky" x1="0" y1="0" x2="0" y2="1"><stop offset="0" stop-color="#a0e0ff"/><stop offset="1" stop-color="#3041f3"/></linearGradient></defs><rect x="21" y="63" width="564" height="474" fill="url(#sky)"/><g stroke-linecap="butt"><line x1="156.4" y1="366.5" x2="313.0" y2="97.9" stroke="#bd7a74" stroke-width="2.3"/>
<line x1="156.4" y1="366.5" x2="313.0" y2="97.9" stroke="#5a3034" stroke-opacity="0.55" stroke-width="0.8"/>
<line x1="224.6" y1="377.9" x2="381.2" y2="109.3" stroke="#bd7a74" stroke-width="2.3"/>
<line x1="224.6" y1="377.9" x2="381.2" y2="109.3" stroke="#5a3034" stroke-opacity="0.55" stroke-width="0.8"/>
<line x1="292.9" y1="406.3" x2="449.5" y2="137.7" stroke="#bd7a74" stroke-width="2.3"/>
<line x1="292.9" y1="406.3" x2="449.5" y2="137.7" stroke="#5a3034" stroke-opacity="0.55" stroke-width="0.8"/>
<line x1="150.8" y1="247.8" x2="250.4" y2="205.4" stroke="#bd7a74" stroke-width="2.0"/>
<line x1="150.8" y1="247.8" x2="250.4" y2="205.4" stroke="#5a3034" stroke-opacity="0.55" stroke-width="0.8"/>
<line x1="182.2" y1="194.0" x2="219.1" y2="259.1" stroke="#bd7a74" stroke-width="2.0"/>
<line x1="182.2" y1="194.0" x2="219.1" y2="259.1" stroke="#5a3034" stroke-opacity="0.55" stroke-width="0.8"/>
<line x1="219.1" y1="259.1" x2="318.6" y2="216.7" stroke="#bd7a74" stroke-width="2.0"/>
<line x1="219.1" y1="259.1" x2="318.6" y2="216.7" stroke="#5a3034" stroke-opacity="0.55" stroke-width="0.8"/>
<line x1="250.4" y1="205.4" x2="287.3" y2="270.4" stroke="#bd7a74" stroke-width="2.0"/>
<line x1="250.4" y1="205.4" x2="287.3" y2="270.4" stroke="#5a3034" stroke-opacity="0.55" stroke-width="0.8"/>
<line x1="287.3" y1="270.4" x2="386.8" y2="245.2" stroke="#bd7a74" stroke-width="2.0"/>
<line x1="287.3" y1="270.4" x2="386.8" y2="245.2" stroke="#5a3034" stroke-opacity="0.55" stroke-width="0.8"/>
<line x1="318.6" y1="216.7" x2="355.5" y2="298.9" stroke="#bd7a74" stroke-width="2.0"/>
<line x1="318.6" y1="216.7" x2="355.5" y2="298.9" stroke="#5a3034" stroke-opacity="0.55" stroke-width="0.8"/>
<line x1="355.5" y1="298.9" x2="455.1" y2="273.6" stroke="#bd7a74" stroke-width="2.0"/>
<line x1="355.5" y1="298.9" x2="455.1" y2="273.6" stroke="#5a3034" stroke-opacity="0.55" stroke-width="0.8"/>
<line x1="386.8" y1="245.2" x2="423.7" y2="327.4" stroke="#bd7a74" stroke-width="2.0"/>
<line x1="386.8" y1="245.2" x2="423.7" y2="327.4" stroke="#5a3034" stroke-opacity="0.55" stroke-width="0.8"/>
<line x1="150.8" y1="247.8" x2="182.2" y2="274.0" stroke="#bd7a74" stroke-width="2.2"/>
<line x1="150.8" y1="247.8" x2="182.2" y2="274.0" stroke="#5a3034" stroke-opacity="0.55" stroke-width="0.8"/>
<line x1="150.8" y1="327.8" x2="182.2" y2="231.8" stroke="#bd7a74" stroke-width="2.2"/>
<line x1="150.8" y1="327.8" x2="182.2" y2="231.8" stroke="#5a3034" stroke-opacity="0.55" stroke-width="0.8"/>
<line x1="150.8" y1="285.5" x2="182.2" y2="274.0" stroke="#bd7a74" stroke-width="2.2"/>
<line x1="150.8" y1="285.5" x2="182.2" y2="274.0" stroke="#5a3034" stroke-opacity="0.55" stroke-width="0.8"/>
<line x1="150.8" y1="285.5" x2="182.2" y2="194.0" stroke="#bd7a74" stroke-width="2.2"/>
<line x1="150.8" y1="285.5" x2="182.2" y2="194.0" stroke="#5a3034" stroke-opacity="0.55" stroke-width="0.8"/>
<line x1="150.8" y1="247.8" x2="182.2" y2="231.8" stroke="#bd7a74" stroke-width="2.2"/>
<line x1="150.8" y1="247.8" x2="182.2" y2="231.8" stroke="#5a3034" stroke-opacity="0.55" stroke-width="0.8"/>
<line x1="182.2" y1="194.0" x2="213.5" y2="220.3" stroke="#bd7a74" stroke-width="2.2"/>
<line x1="182.2" y1="194.0" x2="213.5" y2="220.3" stroke="#5a3034" stroke-opacity="0.55" stroke-width="0.8"/>
<line x1="182.2" y1="274.0" x2="213.5" y2="178.0" stroke="#bd7a74" stroke-width="2.2"/>
<line x1="182.2" y1="274.0" x2="213.5" y2="178.0" stroke="#5a3034" stroke-opacity="0.55" stroke-width="0.8"/>
<line x1="182.2" y1="231.8" x2="213.5" y2="220.3" stroke="#bd7a74" stroke-width="2.2"/>
<line x1="182.2" y1="231.8" x2="213.5" y2="220.3" stroke="#5a3034" stroke-opacity="0.55" stroke-width="0.8"/>
<line x1="182.2" y1="231.8" x2="213.5" y2="140.3" stroke="#bd7a74" stroke-width="2.2"/>
<line x1="182.2" y1="231.8" x2="213.5" y2="140.3" stroke="#5a3034" stroke-opacity="0.55" stroke-width="0.8"/>
<line x1="182.2" y1="194.0" x2="213.5" y2="178.0" stroke="#bd7a74" stroke-width="2.2"/>
<line x1="182.2" y1="194.0" x2="213.5" y2="178.0" stroke="#5a3034" stroke-opacity="0.55" stroke-width="0.8"/>
<line x1="423.7" y1="327.4" x2="455.1" y2="353.6" stroke="#bd7a74" stroke-width="2.2"/>
<line x1="423.7" y1="327.4" x2="455.1" y2="353.6" stroke="#5a3034" stroke-opacity="0.55" stroke-width="0.8"/>
<line x1="423.7" y1="407.4" x2="455.1" y2="311.4" stroke="#bd7a74" stroke-width="2.2"/>
<line x1="423.7" y1="407.4" x2="455.1" y2="311.4" stroke="#5a3034" stroke-opacity="0.55" stroke-width="0.8"/>
<line x1="423.7" y1="365.1" x2="455.1" y2="353.6" stroke="#bd7a74" stroke-width="2.2"/>
<line x1="423.7" y1="365.1" x2="455.1" y2="353.6" stroke="#5a3034" stroke-opacity="0.55" stroke-width="0.8"/>
<line x1="423.7" y1="365.1" x2="455.1" y2="273.6" stroke="#bd7a74" stroke-width="2.2"/>
<line x1="423.7" y1="365.1" x2="455.1" y2="273.6" stroke="#5a3034" stroke-opacity="0.55" stroke-width="0.8"/>
<line x1="423.7" y1="327.4" x2="455.1" y2="311.4" stroke="#bd7a74" stroke-width="2.2"/>
<line x1="423.7" y1="327.4" x2="455.1" y2="311.4" stroke="#5a3034" stroke-opacity="0.55" stroke-width="0.8"/>
<line x1="455.1" y1="273.6" x2="486.4" y2="299.9" stroke="#bd7a74" stroke-width="2.2"/>
<line x1="455.1" y1="273.6" x2="486.4" y2="299.9" stroke="#5a3034" stroke-opacity="0.55" stroke-width="0.8"/>
<line x1="455.1" y1="353.6" x2="486.4" y2="257.6" stroke="#bd7a74" stroke-width="2.2"/>
<line x1="455.1" y1="353.6" x2="486.4" y2="257.6" stroke="#5a3034" stroke-opacity="0.55" stroke-width="0.8"/>
<line x1="455.1" y1="311.4" x2="486.4" y2="299.9" stroke="#bd7a74" stroke-width="2.2"/>
<line x1="455.1" y1="311.4" x2="486.4" y2="299.9" stroke="#5a3034" stroke-opacity="0.55" stroke-width="0.8"/>
<line x1="455.1" y1="311.4" x2="486.4" y2="219.9" stroke="#bd7a74" stroke-width="2.2"/>
<line x1="455.1" y1="311.4" x2="486.4" y2="219.9" stroke="#5a3034" stroke-opacity="0.55" stroke-width="0.8"/>
<line x1="455.1" y1="273.6" x2="486.4" y2="257.6" stroke="#bd7a74" stroke-width="2.2"/>
<line x1="455.1" y1="273.6" x2="486.4" y2="257.6" stroke="#5a3034" stroke-opacity="0.55" stroke-width="0.8"/>
<line x1="88.2" y1="392.9" x2="244.8" y2="124.3" stroke="#bd7a74" stroke-width="2.4"/>
<line x1="88.2" y1="392.9" x2="244.8" y2="124.3" stroke="#5a3034" stroke-opacity="0.55" stroke-width="0.8"/>
<line x1="361.1" y1="472.5" x2="517.7" y2="203.9" stroke="#bd7a74" stroke-width="2.4"/>
<line x1="361.1" y1="472.5" x2="517.7" y2="203.9" stroke="#5a3034" stroke-opacity="0.55" stroke-width="0.8"/>
<line x1="133.7" y1="448.5" x2="133.7" y2="362.8" stroke="#bd7a74" stroke-width="4.2"/>
<line x1="133.7" y1="448.5" x2="133.7" y2="362.8" stroke="#5a3034" stroke-opacity="0.55" stroke-width="0.8"/>
<line x1="179.2" y1="461.7" x2="179.2" y2="370.3" stroke="#bd7a74" stroke-width="4.2"/>
<line x1="179.2" y1="461.7" x2="179.2" y2="370.3" stroke="#5a3034" stroke-opacity="0.55" stroke-width="0.8"/>
<line x1="270.1" y1="488.3" x2="270.1" y2="396.8" stroke="#bd7a74" stroke-width="4.2"/>
<line x1="270.1" y1="488.3" x2="270.1" y2="396.8" stroke="#5a3034" stroke-opacity="0.55" stroke-width="0.8"/>
<line x1="315.6" y1="501.5" x2="315.6" y2="415.8" stroke="#bd7a74" stroke-width="4.2"/>
<line x1="315.6" y1="501.5" x2="315.6" y2="415.8" stroke="#5a3034" stroke-opacity="0.55" stroke-width="0.8"/>
<line x1="290.3" y1="179.9" x2="290.3" y2="94.2" stroke="#bd7a74" stroke-width="3.2"/>
<line x1="290.3" y1="179.9" x2="290.3" y2="94.2" stroke="#5a3034" stroke-opacity="0.55" stroke-width="0.8"/>
<line x1="335.8" y1="193.1" x2="335.8" y2="101.7" stroke="#bd7a74" stroke-width="3.2"/>
<line x1="335.8" y1="193.1" x2="335.8" y2="101.7" stroke="#5a3034" stroke-opacity="0.55" stroke-width="0.8"/>
<line x1="426.7" y1="219.7" x2="426.7" y2="128.2" stroke="#bd7a74" stroke-width="3.2"/>
<line x1="426.7" y1="219.7" x2="426.7" y2="128.2" stroke="#5a3034" stroke-opacity="0.55" stroke-width="0.8"/>
<line x1="472.2" y1="232.9" x2="472.2" y2="147.2" stroke="#bd7a74" stroke-width="3.2"/>
<line x1="472.2" y1="232.9" x2="472.2" y2="147.2" stroke="#5a3034" stroke-opacity="0.55" stroke-width="0.8"/>
<line x1="244.8" y1="128.9" x2="335.8" y2="155.4" stroke="#bd7a74" stroke-width="2.8"/>
<line x1="244.8" y1="128.9" x2="335.8" y2="155.4" stroke="#5a3034" stroke-opacity="0.55" stroke-width="0.8"/>
<line x1="426.7" y1="182.0" x2="517.7" y2="208.5" stroke="#bd7a74" stroke-width="2.8"/>
<line x1="426.7" y1="182.0" x2="517.7" y2="208.5" stroke="#5a3034" stroke-opacity="0.55" stroke-width="0.8"/>
<line x1="96.0" y1="379.5" x2="368.9" y2="459.1" stroke="#bd7a74" stroke-width="3.0"/>
<line x1="96.0" y1="379.5" x2="368.9" y2="459.1" stroke="#5a3034" stroke-opacity="0.55" stroke-width="0.8"/>
<line x1="103.9" y1="366.1" x2="376.8" y2="445.7" stroke="#bd7a74" stroke-width="3.0"/>
<line x1="103.9" y1="366.1" x2="376.8" y2="445.7" stroke="#5a3034" stroke-opacity="0.55" stroke-width="0.8"/>
<line x1="111.7" y1="352.6" x2="384.6" y2="432.2" stroke="#bd7a74" stroke-width="3.0"/>
<line x1="111.7" y1="352.6" x2="384.6" y2="432.2" stroke="#5a3034" stroke-opacity="0.55" stroke-width="0.8"/>
<line x1="88.2" y1="392.9" x2="119.5" y2="339.2" stroke="#bd7a74" stroke-width="3.2"/>
<line x1="88.2" y1="392.9" x2="119.5" y2="339.2" stroke="#5a3034" stroke-opacity="0.55" stroke-width="0.8"/>
<line x1="133.7" y1="406.2" x2="165.0" y2="352.5" stroke="#bd7a74" stroke-width="3.2"/>
<line x1="133.7" y1="406.2" x2="165.0" y2="352.5" stroke="#5a3034" stroke-opacity="0.55" stroke-width="0.8"/>
<line x1="179.2" y1="419.4" x2="210.5" y2="365.7" stroke="#bd7a74" stroke-width="3.2"/>
<line x1="179.2" y1="419.4" x2="210.5" y2="365.7" stroke="#5a3034" stroke-opacity="0.55" stroke-width="0.8"/>
<line x1="224.6" y1="432.7" x2="256.0" y2="379.0" stroke="#bd7a74" stroke-width="3.2"/>
<line x1="224.6" y1="432.7" x2="256.0" y2="379.0" stroke="#5a3034" stroke-opacity="0.55" stroke-width="0.8"/>
<line x1="270.1" y1="446.0" x2="301.5" y2="392.3" stroke="#bd7a74" stroke-width="3.2"/>
<line x1="270.1" y1="446.0" x2="301.5" y2="392.3" stroke="#5a3034" stroke-opacity="0.55" stroke-width="0.8"/>
<line x1="315.6" y1="459.2" x2="346.9" y2="405.5" stroke="#bd7a74" stroke-width="3.2"/>
<line x1="315.6" y1="459.2" x2="346.9" y2="405.5" stroke="#5a3034" stroke-opacity="0.55" stroke-width="0.8"/>
<line x1="361.1" y1="472.5" x2="392.4" y2="418.8" stroke="#bd7a74" stroke-width="3.2"/>
<line x1="361.1" y1="472.5" x2="392.4" y2="418.8" stroke="#5a3034" stroke-opacity="0.55" stroke-width="0.8"/>
<line x1="165.0" y1="394.7" x2="165.0" y2="352.5" stroke="#bd7a74" stroke-width="3.6"/>
<line x1="165.0" y1="394.7" x2="165.0" y2="352.5" stroke="#5a3034" stroke-opacity="0.55" stroke-width="0.8"/>
<line x1="210.5" y1="408.0" x2="210.5" y2="365.7" stroke="#bd7a74" stroke-width="3.6"/>
<line x1="210.5" y1="408.0" x2="210.5" y2="365.7" stroke="#5a3034" stroke-opacity="0.55" stroke-width="0.8"/>
<line x1="301.5" y1="434.5" x2="301.5" y2="392.3" stroke="#bd7a74" stroke-width="3.6"/>
<line x1="301.5" y1="434.5" x2="301.5" y2="392.3" stroke="#5a3034" stroke-opacity="0.55" stroke-width="0.8"/>
<line x1="346.9" y1="447.8" x2="346.9" y2="405.5" stroke="#bd7a74" stroke-width="3.6"/>
<line x1="346.9" y1="447.8" x2="346.9" y2="405.5" stroke="#5a3034" stroke-opacity="0.55" stroke-width="0.8"/>
<line x1="88.2" y1="355.2" x2="244.8" y2="86.6" stroke="#cb8682" stroke-width="3.0"/>
<line x1="88.2" y1="355.2" x2="244.8" y2="86.6" stroke="#7a5058" stroke-width="1.1"/>
<line x1="361.1" y1="434.8" x2="517.7" y2="166.2" stroke="#cb8682" stroke-width="3.0"/>
<line x1="361.1" y1="434.8" x2="517.7" y2="166.2" stroke="#7a5058" stroke-width="1.1"/>
<line x1="88.2" y1="392.9" x2="361.1" y2="472.5" stroke="#cb8682" stroke-width="4.0"/>
<line x1="88.2" y1="393.4" x2="361.1" y2="473.0" stroke="#7a5058" stroke-width="1.1"/>
<line x1="119.5" y1="339.2" x2="392.4" y2="418.8" stroke="#cb8682" stroke-width="4.0"/>
<line x1="119.5" y1="339.7" x2="392.4" y2="419.3" stroke="#7a5058" stroke-width="1.1"/>
<line x1="88.2" y1="435.2" x2="88.2" y2="355.2" stroke="#cb8682" stroke-width="5.4"/>
<line x1="87.9" y1="435.2" x2="87.9" y2="355.2" stroke="#454478" stroke-width="1.3"/>
<line x1="361.1" y1="514.8" x2="361.1" y2="434.8" stroke="#cb8682" stroke-width="7.0"/>
<line x1="360.8" y1="514.8" x2="360.8" y2="434.8" stroke="#454478" stroke-width="1.3"/>
<line x1="88.2" y1="355.2" x2="224.6" y2="377.9" stroke="#cb8682" stroke-width="5.8"/>
<line x1="88.2" y1="355.7" x2="224.6" y2="378.4" stroke="#3a3048" stroke-width="1.1"/>
<line x1="224.6" y1="377.9" x2="361.1" y2="434.8" stroke="#cb8682" stroke-width="5.8"/>
<line x1="224.6" y1="378.4" x2="361.1" y2="435.3" stroke="#3a3048" stroke-width="1.1"/>
<line x1="119.5" y1="381.5" x2="119.5" y2="301.5" stroke="#cb8682" stroke-width="6.4"/>
<line x1="119.2" y1="381.5" x2="119.2" y2="301.5" stroke="#454478" stroke-width="1.3"/>
<line x1="392.4" y1="461.1" x2="392.4" y2="381.1" stroke="#cb8682" stroke-width="7.6"/>
<line x1="392.1" y1="461.1" x2="392.1" y2="381.1" stroke="#454478" stroke-width="1.3"/>
<line x1="119.5" y1="301.5" x2="256.0" y2="324.1" stroke="#cb8682" stroke-width="5.8"/>
<line x1="119.5" y1="302.0" x2="256.0" y2="324.6" stroke="#3a3048" stroke-width="1.1"/>
<line x1="256.0" y1="324.1" x2="392.4" y2="381.1" stroke="#cb8682" stroke-width="5.8"/>
<line x1="256.0" y1="324.6" x2="392.4" y2="381.6" stroke="#3a3048" stroke-width="1.1"/>
<line x1="150.8" y1="327.8" x2="150.8" y2="247.8" stroke="#cb8682" stroke-width="7.0"/>
<line x1="150.5" y1="327.8" x2="150.5" y2="247.8" stroke="#454478" stroke-width="1.3"/>
<line x1="423.7" y1="407.4" x2="423.7" y2="327.4" stroke="#cb8682" stroke-width="7.8"/>
<line x1="423.4" y1="407.4" x2="423.4" y2="327.4" stroke="#454478" stroke-width="1.3"/>
<line x1="150.8" y1="247.8" x2="287.3" y2="270.4" stroke="#cb8682" stroke-width="5.8"/>
<line x1="150.8" y1="248.3" x2="287.3" y2="270.9" stroke="#3a3048" stroke-width="1.1"/>
<line x1="287.3" y1="270.4" x2="423.7" y2="327.4" stroke="#cb8682" stroke-width="5.8"/>
<line x1="287.3" y1="270.9" x2="423.7" y2="327.9" stroke="#3a3048" stroke-width="1.1"/>
<line x1="182.2" y1="274.0" x2="182.2" y2="194.0" stroke="#cb8682" stroke-width="6.8"/>
<line x1="181.9" y1="274.0" x2="181.9" y2="194.0" stroke="#454478" stroke-width="1.3"/>
<line x1="455.1" y1="353.6" x2="455.1" y2="273.6" stroke="#cb8682" stroke-width="7.6"/>
<line x1="454.8" y1="353.6" x2="454.8" y2="273.6" stroke="#454478" stroke-width="1.3"/>
<line x1="182.2" y1="194.0" x2="318.6" y2="216.7" stroke="#cb8682" stroke-width="5.8"/>
<line x1="182.2" y1="194.5" x2="318.6" y2="217.2" stroke="#3a3048" stroke-width="1.1"/>
<line x1="318.6" y1="216.7" x2="455.1" y2="273.6" stroke="#cb8682" stroke-width="5.8"/>
<line x1="318.6" y1="217.2" x2="455.1" y2="274.1" stroke="#3a3048" stroke-width="1.1"/>
<line x1="213.5" y1="220.3" x2="213.5" y2="140.3" stroke="#cb8682" stroke-width="6.6"/>
<line x1="213.2" y1="220.3" x2="213.2" y2="140.3" stroke="#454478" stroke-width="1.3"/>
<line x1="486.4" y1="299.9" x2="486.4" y2="219.9" stroke="#cb8682" stroke-width="6.2"/>
<line x1="486.1" y1="299.9" x2="486.1" y2="219.9" stroke="#454478" stroke-width="1.3"/>
<line x1="213.5" y1="140.3" x2="349.9" y2="163.0" stroke="#cb8682" stroke-width="5.8"/>
<line x1="213.5" y1="140.8" x2="349.9" y2="163.5" stroke="#3a3048" stroke-width="1.1"/>
<line x1="349.9" y1="163.0" x2="486.4" y2="219.9" stroke="#cb8682" stroke-width="5.8"/>
<line x1="349.9" y1="163.5" x2="486.4" y2="220.4" stroke="#3a3048" stroke-width="1.1"/>
<line x1="244.8" y1="166.6" x2="244.8" y2="86.6" stroke="#cb8682" stroke-width="5.6"/>
<line x1="244.5" y1="166.6" x2="244.5" y2="86.6" stroke="#454478" stroke-width="1.3"/>
<line x1="517.7" y1="246.2" x2="517.7" y2="166.2" stroke="#cb8682" stroke-width="5.0"/>
<line x1="517.4" y1="246.2" x2="517.4" y2="166.2" stroke="#454478" stroke-width="1.3"/>
<line x1="244.8" y1="86.6" x2="381.2" y2="109.3" stroke="#cb8682" stroke-width="5.8"/>
<line x1="244.8" y1="87.1" x2="381.2" y2="109.8" stroke="#3a3048" stroke-width="1.1"/>
<line x1="381.2" y1="109.3" x2="517.7" y2="166.2" stroke="#cb8682" stroke-width="5.8"/>
<line x1="381.2" y1="109.8" x2="517.7" y2="166.7" stroke="#3a3048" stroke-width="1.1"/></g><line x1="88.2" y1="435.2" x2="244.8" y2="166.6" stroke="#1a2a6a" stroke-width="1.0"/><line x1="88.2" y1="435.2" x2="105.7" y2="405.1" stroke="#128a3a" stroke-width="1.2"/><line x1="361.1" y1="514.8" x2="517.7" y2="246.2" stroke="#0a0a28" stroke-width="1.0"/><line x1="244.8" y1="166.6" x2="517.7" y2="246.2" stroke="#0a0a28" stroke-width="0.8"/><line x1="133.7" y1="448.5" x2="361.1" y2="514.8" stroke="#0a0a28" stroke-width="0.9"/><line x1="88.2" y1="435.2" x2="133.7" y2="448.5" stroke="#8a1420" stroke-width="1.4"/><g fill="none" stroke="#0c0c2a" stroke-width="1.0" stroke-linecap="round"><path d="M106.5 378.8 q-5.6 -.6 -4.6 3.6 q1.2 3 5.2 2.6" /><path d="M131.4 387.3 q5.2 1.4 3.4 5.2 q-1.6 2.4 -5 1.4" /><path d="M152.0 392.1 q-5.6 -.6 -4.6 3.6 q1.2 3 5.2 2.6" /><path d="M176.9 400.5 q5.2 1.4 3.4 5.2 q-1.6 2.4 -5 1.4" /><path d="M197.5 405.3 q-5.6 -.6 -4.6 3.6 q1.2 3 5.2 2.6" /><path d="M222.4 413.8 q5.2 1.4 3.4 5.2 q-1.6 2.4 -5 1.4" /><path d="M243.0 418.6 q-5.6 -.6 -4.6 3.6 q1.2 3 5.2 2.6" /><path d="M267.9 427.1 q5.2 1.4 3.4 5.2 q-1.6 2.4 -5 1.4" /><path d="M288.4 431.9 q-5.6 -.6 -4.6 3.6 q1.2 3 5.2 2.6" /><path d="M313.4 440.3 q5.2 1.4 3.4 5.2 q-1.6 2.4 -5 1.4" /><path d="M333.9 445.1 q-5.6 -.6 -4.6 3.6 q1.2 3 5.2 2.6" /><path d="M358.8 453.6 q5.2 1.4 3.4 5.2 q-1.6 2.4 -5 1.4" /><path d="M114.3 365.4 q-5.6 -.6 -4.6 3.6 q1.2 3 5.2 2.6" /><path d="M139.3 373.8 q5.2 1.4 3.4 5.2 q-1.6 2.4 -5 1.4" /><path d="M159.8 378.6 q-5.6 -.6 -4.6 3.6 q1.2 3 5.2 2.6" /><path d="M184.7 387.1 q5.2 1.4 3.4 5.2 q-1.6 2.4 -5 1.4" /><path d="M205.3 391.9 q-5.6 -.6 -4.6 3.6 q1.2 3 5.2 2.6" /><path d="M230.2 400.4 q5.2 1.4 3.4 5.2 q-1.6 2.4 -5 1.4" /><path d="M250.8 405.2 q-5.6 -.6 -4.6 3.6 q1.2 3 5.2 2.6" /><path d="M275.7 413.6 q5.2 1.4 3.4 5.2 q-1.6 2.4 -5 1.4" /><path d="M296.3 418.4 q-5.6 -.6 -4.6 3.6 q1.2 3 5.2 2.6" /><path d="M321.2 426.9 q5.2 1.4 3.4 5.2 q-1.6 2.4 -5 1.4" /><path d="M341.8 431.7 q-5.6 -.6 -4.6 3.6 q1.2 3 5.2 2.6" /><path d="M366.7 440.2 q5.2 1.4 3.4 5.2 q-1.6 2.4 -5 1.4" /><path d="M122.2 351.9 q-5.6 -.6 -4.6 3.6 q1.2 3 5.2 2.6" /><path d="M147.1 360.4 q5.2 1.4 3.4 5.2 q-1.6 2.4 -5 1.4" /><path d="M167.7 365.2 q-5.6 -.6 -4.6 3.6 q1.2 3 5.2 2.6" /><path d="M192.6 373.7 q5.2 1.4 3.4 5.2 q-1.6 2.4 -5 1.4" /><path d="M213.1 378.5 q-5.6 -.6 -4.6 3.6 q1.2 3 5.2 2.6" /><path d="M238.1 386.9 q5.2 1.4 3.4 5.2 q-1.6 2.4 -5 1.4" /><path d="M258.6 391.7 q-5.6 -.6 -4.6 3.6 q1.2 3 5.2 2.6" /><path d="M283.5 400.2 q5.2 1.4 3.4 5.2 q-1.6 2.4 -5 1.4" /><path d="M304.1 405.0 q-5.6 -.6 -4.6 3.6 q1.2 3 5.2 2.6" /><path d="M329.0 413.5 q5.2 1.4 3.4 5.2 q-1.6 2.4 -5 1.4" /><path d="M349.6 418.3 q-5.6 -.6 -4.6 3.6 q1.2 3 5.2 2.6" /><path d="M374.5 426.7 q5.2 1.4 3.4 5.2 q-1.6 2.4 -5 1.4" /></g><line x1="88.2" y1="435.2" x2="63.9" y2="476.6" stroke="#0a0a28" stroke-width="0.9" stroke-dasharray="2.2 2.2"/><line x1="63.9" y1="476.6" x2="336.8" y2="556.2" stroke="#0a0a28" stroke-width="1.0"/><path d="M63.9 476.6 L68.4 476.1 L67.5 479.4Z" fill="#0a0a28"/><line x1="361.1" y1="514.8" x2="346.0" y2="541.0" stroke="#0a0a28" stroke-width="0.9" stroke-dasharray="2.2 2.2"/><text transform="translate(201.5 510.3) rotate(16.3)" text-anchor="middle" y="2.3" font-size="6.9" font-weight="bold" font-style="italic" fill="#0a0a1e">18000</text><line x1="361.1" y1="514.8" x2="405.2" y2="524.8" stroke="#0a0a28" stroke-width="0.9" stroke-dasharray="2.2 2.2"/><line x1="517.7" y1="246.2" x2="560.2" y2="259.8" stroke="#0a0a28" stroke-width="0.9" stroke-dasharray="2.2 2.2"/><line x1="405.2" y1="524.8" x2="560.2" y2="259.8" stroke="#0a0a28" stroke-width="1.0"/><path d="M405.2 524.8 L405.9 520.3 L408.8 522.0Z" fill="#0a0a28"/><path d="M560.2 259.8 L559.5 264.3 L556.6 262.6Z" fill="#0a0a28"/><text transform="translate(477.0 389.6) rotate(-59.7)" text-anchor="middle" y="2.3" font-size="7.2" font-weight="bold" font-style="italic" fill="#0a0a1e">25000</text><line x1="154.0" y1="342.2" x2="420.3" y2="419.3" stroke="#0a0a28" stroke-width="1.0"/><path d="M154.0 342.2 L158.5 341.7 L157.6 345.0Z" fill="#0a0a28"/><path d="M420.3 419.3 L415.8 419.8 L416.7 416.5Z" fill="#0a0a28"/><text transform="translate(289.0 374.6) rotate(16.2)" text-anchor="middle" y="2.3" font-size="6.8" font-weight="bold" font-style="italic" fill="#0a0a1e">18000</text><line x1="454.7" y1="319.0" x2="454.7" y2="415.5" stroke="#0a0a28" stroke-width="1.0"/><path d="M454.7 415.5 L453.0 411.3 L456.4 411.3Z" fill="#0a0a28"/><path d="M454.7 336.3 L456.4 340.5 L453.0 340.5Z" fill="#0a0a28"/><path d="M454.7 335.7 L453.0 331.5 L456.4 331.5Z" fill="#0a0a28"/><path d="M454.7 319.0 L456.4 323.2 L453.0 323.2Z" fill="#0a0a28"/><line x1="423.7" y1="407.4" x2="454.7" y2="415.5" stroke="#0a0a28" stroke-width="0.9" stroke-dasharray="2.2 2.2"/><line x1="423.7" y1="327.4" x2="454.7" y2="336.0" stroke="#0a0a28" stroke-width="0.9" stroke-dasharray="2.2 2.2"/><line x1="287.3" y1="270.4" x2="454.7" y2="319.0" stroke="#0a0a28" stroke-width="0.9" stroke-dasharray="2.2 2.2"/><text transform="translate(448.4 376.5) rotate(-90.0)" text-anchor="middle" y="2.3" font-size="6.2" font-weight="bold" font-style="italic" fill="#0a0a1e">7000</text><text transform="translate(448.6 327.0) rotate(-90.0)" text-anchor="middle" y="2.3" font-size="5.4" font-weight="bold" font-style="italic" fill="#0a0a1e">1500</text><line x1="59.7" y1="498.0" x2="59.7" y2="477.5" stroke="#1a22e8" stroke-width="1.2"/><line x1="59.7" y1="498.0" x2="70.2" y2="480.2" stroke="#12c032" stroke-width="1.3"/><line x1="59.7" y1="498.0" x2="86.5" y2="506.5" stroke="#e01030" stroke-width="1.3"/><g font-size="7.2" font-weight="bold"><text x="55.2" y="473.8" fill="#1a22e8">Z</text><text x="69" y="476.2" fill="#12c032">Y</text><text x="88.8" y="508.6" fill="#e01030">X</text></g><g fill="none" stroke="#1c8a3a" stroke-width="0.85"><rect x="89.2" y="350.6" width="11.6" height="9" rx="2.4" transform="rotate(8 88.2 355.2)"/><path d="M83.7 352.7 l6.5 -1.5 q1.8 0 1.8 2 v10 q0 2 -1.8 2.3 l-4.2 1 q-2.3 .2 -2.3 -2z"/><rect x="349.1" y="429.8" width="11" height="7.5" rx="2.4" transform="rotate(22 361.1 434.8)"/><path d="M357.6 431.8 l5.2 -1.2 q1.6 0 1.6 1.8 v10.5 q0 1.6 -1.6 2 l-3.2 .8 q-2 .2 -2 -1.6z"/><rect x="210.7" y="374.5" width="13.6" height="8.0" rx="2.6" transform="rotate(9.4 224.6 377.9)"/><rect x="224.9" y="374.5" width="13.6" height="8.0" rx="2.6" transform="rotate(22.7 224.6 377.9)"/><path d="M224.6 377.9 l1.4 -3.6"/><path d="M82.2 429.0 v3.4 q0 2.6 2.4 2.6 h7.2 q2.4 0 2.4 -2.6 v-3.4"/><path d="M355.1 508.6 v3.4 q0 2.6 2.4 2.6 h7.2 q2.4 0 2.4 -2.6 v-3.4"/><rect x="120.5" y="296.9" width="11.6" height="9" rx="2.4" transform="rotate(8 119.5 301.5)"/><path d="M115.0 299.0 l6.5 -1.5 q1.8 0 1.8 2 v10 q0 2 -1.8 2.3 l-4.2 1 q-2.3 .2 -2.3 -2z"/><rect x="380.4" y="376.1" width="11" height="7.5" rx="2.4" transform="rotate(22 392.4 381.1)"/><path d="M388.9 378.1 l5.2 -1.2 q1.6 0 1.6 1.8 v10.5 q0 1.6 -1.6 2 l-3.2 .8 q-2 .2 -2 -1.6z"/><rect x="242.1" y="320.7" width="13.6" height="8.0" rx="2.6" transform="rotate(9.4 256.0 324.1)"/><rect x="256.3" y="320.7" width="13.6" height="8.0" rx="2.6" transform="rotate(22.7 256.0 324.1)"/><path d="M256.0 324.1 l1.4 -3.6"/><path d="M113.5 375.3 v3.4 q0 2.6 2.4 2.6 h7.2 q2.4 0 2.4 -2.6 v-3.4"/><path d="M386.4 454.9 v3.4 q0 2.6 2.4 2.6 h7.2 q2.4 0 2.4 -2.6 v-3.4"/><rect x="151.8" y="243.2" width="11.6" height="9" rx="2.4" transform="rotate(8 150.8 247.8)"/><path d="M146.3 245.3 l6.5 -1.5 q1.8 0 1.8 2 v10 q0 2 -1.8 2.3 l-4.2 1 q-2.3 .2 -2.3 -2z"/><rect x="411.7" y="322.4" width="11" height="7.5" rx="2.4" transform="rotate(22 423.7 327.4)"/><path d="M420.2 324.4 l5.2 -1.2 q1.6 0 1.6 1.8 v10.5 q0 1.6 -1.6 2 l-3.2 .8 q-2 .2 -2 -1.6z"/><rect x="273.4" y="267.0" width="13.6" height="8.0" rx="2.6" transform="rotate(9.4 287.3 270.4)"/><rect x="287.6" y="267.0" width="13.6" height="8.0" rx="2.6" transform="rotate(22.7 287.3 270.4)"/><path d="M287.3 270.4 l1.4 -3.6"/><path d="M144.8 321.6 v3.4 q0 2.6 2.4 2.6 h7.2 q2.4 0 2.4 -2.6 v-3.4"/><path d="M417.7 401.2 v3.4 q0 2.6 2.4 2.6 h7.2 q2.4 0 2.4 -2.6 v-3.4"/><rect x="183.2" y="189.4" width="11.6" height="9" rx="2.4" transform="rotate(8 182.2 194.0)"/><path d="M177.7 191.5 l6.5 -1.5 q1.8 0 1.8 2 v10 q0 2 -1.8 2.3 l-4.2 1 q-2.3 .2 -2.3 -2z"/><rect x="443.1" y="268.6" width="11" height="7.5" rx="2.4" transform="rotate(22 455.1 273.6)"/><path d="M451.6 270.6 l5.2 -1.2 q1.6 0 1.6 1.8 v10.5 q0 1.6 -1.6 2 l-3.2 .8 q-2 .2 -2 -1.6z"/><rect x="304.7" y="213.3" width="13.6" height="8.0" rx="2.6" transform="rotate(9.4 318.6 216.7)"/><rect x="318.9" y="213.3" width="13.6" height="8.0" rx="2.6" transform="rotate(22.7 318.6 216.7)"/><path d="M318.6 216.7 l1.4 -3.6"/><path d="M176.2 267.8 v3.4 q0 2.6 2.4 2.6 h7.2 q2.4 0 2.4 -2.6 v-3.4"/><path d="M449.1 347.4 v3.4 q0 2.6 2.4 2.6 h7.2 q2.4 0 2.4 -2.6 v-3.4"/><rect x="214.5" y="135.7" width="11.6" height="9" rx="2.4" transform="rotate(8 213.5 140.3)"/><path d="M209.0 137.8 l6.5 -1.5 q1.8 0 1.8 2 v10 q0 2 -1.8 2.3 l-4.2 1 q-2.3 .2 -2.3 -2z"/><rect x="474.4" y="214.9" width="11" height="7.5" rx="2.4" transform="rotate(22 486.4 219.9)"/><path d="M482.9 216.9 l5.2 -1.2 q1.6 0 1.6 1.8 v10.5 q0 1.6 -1.6 2 l-3.2 .8 q-2 .2 -2 -1.6z"/><rect x="336.0" y="159.6" width="13.6" height="8.0" rx="2.6" transform="rotate(9.4 349.9 163.0)"/><rect x="350.2" y="159.6" width="13.6" height="8.0" rx="2.6" transform="rotate(22.7 349.9 163.0)"/><path d="M349.9 163.0 l1.4 -3.6"/><path d="M207.5 214.1 v3.4 q0 2.6 2.4 2.6 h7.2 q2.4 0 2.4 -2.6 v-3.4"/><path d="M480.4 293.7 v3.4 q0 2.6 2.4 2.6 h7.2 q2.4 0 2.4 -2.6 v-3.4"/><rect x="245.8" y="82.0" width="11.6" height="9" rx="2.4" transform="rotate(8 244.8 86.6)"/><path d="M240.3 84.1 l6.5 -1.5 q1.8 0 1.8 2 v10 q0 2 -1.8 2.3 l-4.2 1 q-2.3 .2 -2.3 -2z"/><rect x="505.7" y="161.2" width="11" height="7.5" rx="2.4" transform="rotate(22 517.7 166.2)"/><path d="M514.2 163.2 l5.2 -1.2 q1.6 0 1.6 1.8 v10.5 q0 1.6 -1.6 2 l-3.2 .8 q-2 .2 -2 -1.6z"/><rect x="367.3" y="105.9" width="13.6" height="8.0" rx="2.6" transform="rotate(9.4 381.2 109.3)"/><rect x="381.6" y="105.9" width="13.6" height="8.0" rx="2.6" transform="rotate(22.7 381.2 109.3)"/><path d="M381.2 109.3 l1.4 -3.6"/><path d="M238.8 160.4 v3.4 q0 2.6 2.4 2.6 h7.2 q2.4 0 2.4 -2.6 v-3.4"/><path d="M511.7 240.0 v3.4 q0 2.6 2.4 2.6 h7.2 q2.4 0 2.4 -2.6 v-3.4"/><rect x="173.8" y="355.7" width="13.6" height="8.0" rx="2.6" transform="rotate(16.3 187.7 359.1)"/><rect x="188.0" y="355.7" width="13.6" height="8.0" rx="2.6" transform="rotate(16.3 187.7 359.1)"/><path d="M187.7 359.1 l1.4 -3.6"/><rect x="310.3" y="395.5" width="13.6" height="8.0" rx="2.6" transform="rotate(16.3 324.2 398.9)"/><rect x="324.5" y="395.5" width="13.6" height="8.0" rx="2.6" transform="rotate(16.3 324.2 398.9)"/><path d="M324.2 398.9 l1.4 -3.6"/><path d="M371.5 446.5 L388 427 M376.9 449.1 L393.4 429.6 M371.5 446.5 l5.4 2.6 M373.9 443.7 l5.4 2.6 M376.2 440.9 l5.4 2.6 M378.6 438.1 l5.4 2.6 M380.9 435.4 l5.4 2.6 M383.3 432.6 l5.4 2.6 M385.6 429.8 l5.4 2.6 M388.0 427.0 l5.4 2.6"/></g><rect x="86.4" y="433.4" width="3.6" height="3.4" fill="none" stroke="#f39a26" stroke-width="0.9"/><line x1="90.2" y1="435.8" x2="102.2" y2="439.1" stroke="#f39a26" stroke-width="1.1" stroke-dasharray="3.4 1.6"/><line x1="102.2" y1="437.1" x2="102.2" y2="441.3" stroke="#f39a26" stroke-width="1.5"/><line x1="88.2" y1="437.2" x2="88.2" y2="444.2" stroke="#f39a26" stroke-width="1.1" stroke-dasharray="2.4 1.4"/><ellipse cx="88.2" cy="445.4" rx="2.3" ry="1.5" fill="#f39a26"/><rect x="359.3" y="513.0" width="3.6" height="3.4" fill="none" stroke="#f39a26" stroke-width="0.9"/><line x1="363.1" y1="515.4" x2="375.1" y2="518.7" stroke="#f39a26" stroke-width="1.1" stroke-dasharray="3.4 1.6"/><line x1="375.1" y1="516.7" x2="375.1" y2="520.9" stroke="#f39a26" stroke-width="1.5"/><line x1="361.1" y1="516.8" x2="361.1" y2="523.8" stroke="#f39a26" stroke-width="1.1" stroke-dasharray="2.4 1.4"/><ellipse cx="361.1" cy="525.0" rx="2.3" ry="1.5" fill="#f39a26"/><rect x="117.7" y="379.7" width="3.6" height="3.4" fill="none" stroke="#f39a26" stroke-width="0.9"/><line x1="121.5" y1="382.1" x2="133.5" y2="385.4" stroke="#f39a26" stroke-width="1.1" stroke-dasharray="3.4 1.6"/><line x1="133.5" y1="383.4" x2="133.5" y2="387.6" stroke="#f39a26" stroke-width="1.5"/><line x1="119.5" y1="383.5" x2="119.5" y2="390.5" stroke="#f39a26" stroke-width="1.1" stroke-dasharray="2.4 1.4"/><ellipse cx="119.5" cy="391.7" rx="2.3" ry="1.5" fill="#f39a26"/><rect x="390.6" y="459.3" width="3.6" height="3.4" fill="none" stroke="#f39a26" stroke-width="0.9"/><line x1="394.4" y1="461.7" x2="406.4" y2="465.0" stroke="#f39a26" stroke-width="1.1" stroke-dasharray="3.4 1.6"/><line x1="406.4" y1="463.0" x2="406.4" y2="467.2" stroke="#f39a26" stroke-width="1.5"/><line x1="392.4" y1="463.1" x2="392.4" y2="470.1" stroke="#f39a26" stroke-width="1.1" stroke-dasharray="2.4 1.4"/><ellipse cx="392.4" cy="471.3" rx="2.3" ry="1.5" fill="#f39a26"/><rect x="149.0" y="326.0" width="3.6" height="3.4" fill="none" stroke="#f39a26" stroke-width="0.9"/><line x1="152.8" y1="328.4" x2="164.8" y2="331.7" stroke="#f39a26" stroke-width="1.1" stroke-dasharray="3.4 1.6"/><line x1="164.8" y1="329.7" x2="164.8" y2="333.9" stroke="#f39a26" stroke-width="1.5"/><line x1="150.8" y1="329.8" x2="150.8" y2="336.8" stroke="#f39a26" stroke-width="1.1" stroke-dasharray="2.4 1.4"/><ellipse cx="150.8" cy="338.0" rx="2.3" ry="1.5" fill="#f39a26"/><rect x="421.9" y="405.6" width="3.6" height="3.4" fill="none" stroke="#f39a26" stroke-width="0.9"/><line x1="425.7" y1="408.0" x2="437.7" y2="411.3" stroke="#f39a26" stroke-width="1.1" stroke-dasharray="3.4 1.6"/><line x1="437.7" y1="409.3" x2="437.7" y2="413.5" stroke="#f39a26" stroke-width="1.5"/><line x1="423.7" y1="409.4" x2="423.7" y2="416.4" stroke="#f39a26" stroke-width="1.1" stroke-dasharray="2.4 1.4"/><ellipse cx="423.7" cy="417.6" rx="2.3" ry="1.5" fill="#f39a26"/><rect x="180.4" y="272.2" width="3.6" height="3.4" fill="none" stroke="#f39a26" stroke-width="0.9"/><line x1="184.2" y1="274.6" x2="196.2" y2="277.9" stroke="#f39a26" stroke-width="1.1" stroke-dasharray="3.4 1.6"/><line x1="196.2" y1="275.9" x2="196.2" y2="280.1" stroke="#f39a26" stroke-width="1.5"/><line x1="182.2" y1="276.0" x2="182.2" y2="283.0" stroke="#f39a26" stroke-width="1.1" stroke-dasharray="2.4 1.4"/><ellipse cx="182.2" cy="284.2" rx="2.3" ry="1.5" fill="#f39a26"/><rect x="453.3" y="351.8" width="3.6" height="3.4" fill="none" stroke="#f39a26" stroke-width="0.9"/><line x1="457.1" y1="354.2" x2="469.1" y2="357.5" stroke="#f39a26" stroke-width="1.1" stroke-dasharray="3.4 1.6"/><line x1="469.1" y1="355.5" x2="469.1" y2="359.7" stroke="#f39a26" stroke-width="1.5"/><line x1="455.1" y1="355.6" x2="455.1" y2="362.6" stroke="#f39a26" stroke-width="1.1" stroke-dasharray="2.4 1.4"/><ellipse cx="455.1" cy="363.8" rx="2.3" ry="1.5" fill="#f39a26"/><rect x="211.7" y="218.5" width="3.6" height="3.4" fill="none" stroke="#f39a26" stroke-width="0.9"/><line x1="215.5" y1="220.9" x2="227.5" y2="224.2" stroke="#f39a26" stroke-width="1.1" stroke-dasharray="3.4 1.6"/><line x1="227.5" y1="222.2" x2="227.5" y2="226.4" stroke="#f39a26" stroke-width="1.5"/><line x1="213.5" y1="222.3" x2="213.5" y2="229.3" stroke="#f39a26" stroke-width="1.1" stroke-dasharray="2.4 1.4"/><ellipse cx="213.5" cy="230.5" rx="2.3" ry="1.5" fill="#f39a26"/><rect x="484.6" y="298.1" width="3.6" height="3.4" fill="none" stroke="#f39a26" stroke-width="0.9"/><line x1="488.4" y1="300.5" x2="500.4" y2="303.8" stroke="#f39a26" stroke-width="1.1" stroke-dasharray="3.4 1.6"/><line x1="500.4" y1="301.8" x2="500.4" y2="306.0" stroke="#f39a26" stroke-width="1.5"/><line x1="486.4" y1="301.9" x2="486.4" y2="308.9" stroke="#f39a26" stroke-width="1.1" stroke-dasharray="2.4 1.4"/><ellipse cx="486.4" cy="310.1" rx="2.3" ry="1.5" fill="#f39a26"/><rect x="243.0" y="164.8" width="3.6" height="3.4" fill="none" stroke="#f39a26" stroke-width="0.9"/><line x1="246.8" y1="167.2" x2="258.8" y2="170.5" stroke="#f39a26" stroke-width="1.1" stroke-dasharray="3.4 1.6"/><line x1="258.8" y1="168.5" x2="258.8" y2="172.7" stroke="#f39a26" stroke-width="1.5"/><line x1="244.8" y1="168.6" x2="244.8" y2="175.6" stroke="#f39a26" stroke-width="1.1" stroke-dasharray="2.4 1.4"/><ellipse cx="244.8" cy="176.8" rx="2.3" ry="1.5" fill="#f39a26"/><rect x="515.9" y="244.4" width="3.6" height="3.4" fill="none" stroke="#f39a26" stroke-width="0.9"/><line x1="519.7" y1="246.8" x2="531.7" y2="250.1" stroke="#f39a26" stroke-width="1.1" stroke-dasharray="3.4 1.6"/><line x1="531.7" y1="248.1" x2="531.7" y2="252.3" stroke="#f39a26" stroke-width="1.5"/><line x1="517.7" y1="248.2" x2="517.7" y2="255.2" stroke="#f39a26" stroke-width="1.1" stroke-dasharray="2.4 1.4"/><ellipse cx="517.7" cy="256.4" rx="2.3" ry="1.5" fill="#f39a26"/><rect x="132.1" y="446.9" width="3.2" height="3.2" fill="none" stroke="#f39a26" stroke-width="0.9"/><line x1="135.7" y1="449.1" x2="142.7" y2="451.1" stroke="#f39a26" stroke-width="1.1" stroke-dasharray="3 1.4"/><path d="M133.7 450.1 L129.5 456.5 M133.7 450.1 L134.5 457.1" stroke="#f39a26" stroke-width="1.0" fill="none" stroke-dasharray="2.2 1.2"/><ellipse cx="129.3" cy="457.7" rx="2.1" ry="1.5" fill="#f39a26"/><ellipse cx="134.6" cy="458.3" rx="2.1" ry="1.5" fill="#f39a26"/><rect x="177.6" y="460.1" width="3.2" height="3.2" fill="none" stroke="#f39a26" stroke-width="0.9"/><line x1="177.2" y1="461.1" x2="166.0" y2="457.8" stroke="#f39a26" stroke-width="1.1" stroke-dasharray="3.4 1.6"/><line x1="166.0" y1="455.8" x2="166.0" y2="460.0" stroke="#f39a26" stroke-width="1.5"/><line x1="179.2" y1="463.7" x2="179.2" y2="470.7" stroke="#f39a26" stroke-width="1.1" stroke-dasharray="2.4 1.4"/><ellipse cx="179.2" cy="471.9" rx="2.3" ry="1.5" fill="#f39a26"/><rect x="268.5" y="486.7" width="3.2" height="3.2" fill="none" stroke="#f39a26" stroke-width="0.9"/><line x1="268.1" y1="487.7" x2="256.9" y2="484.4" stroke="#f39a26" stroke-width="1.1" stroke-dasharray="3.4 1.6"/><line x1="256.9" y1="482.4" x2="256.9" y2="486.6" stroke="#f39a26" stroke-width="1.5"/><line x1="270.1" y1="490.3" x2="270.1" y2="497.3" stroke="#f39a26" stroke-width="1.1" stroke-dasharray="2.4 1.4"/><ellipse cx="270.1" cy="498.5" rx="2.3" ry="1.5" fill="#f39a26"/><rect x="314.0" y="499.9" width="3.2" height="3.2" fill="none" stroke="#f39a26" stroke-width="0.9"/><line x1="317.6" y1="502.1" x2="324.6" y2="504.1" stroke="#f39a26" stroke-width="1.1" stroke-dasharray="3 1.4"/><path d="M315.6 503.1 L311.4 509.5 M315.6 503.1 L316.4 510.1" stroke="#f39a26" stroke-width="1.0" fill="none" stroke-dasharray="2.2 1.2"/><ellipse cx="311.2" cy="510.7" rx="2.1" ry="1.5" fill="#f39a26"/><ellipse cx="316.5" cy="511.3" rx="2.1" ry="1.5" fill="#f39a26"/><rect x="288.7" y="178.3" width="3.2" height="3.2" fill="none" stroke="#f39a26" stroke-width="0.9"/><line x1="292.3" y1="180.5" x2="299.3" y2="182.5" stroke="#f39a26" stroke-width="1.1" stroke-dasharray="3 1.4"/><path d="M290.3 181.5 L286.1 187.9 M290.3 181.5 L291.1 188.5" stroke="#f39a26" stroke-width="1.0" fill="none" stroke-dasharray="2.2 1.2"/><ellipse cx="285.9" cy="189.1" rx="2.1" ry="1.5" fill="#f39a26"/><ellipse cx="291.2" cy="189.7" rx="2.1" ry="1.5" fill="#f39a26"/><rect x="334.2" y="191.5" width="3.2" height="3.2" fill="none" stroke="#f39a26" stroke-width="0.9"/><line x1="337.8" y1="193.7" x2="344.8" y2="195.7" stroke="#f39a26" stroke-width="1.1" stroke-dasharray="3 1.4"/><path d="M335.8 194.7 L331.6 201.1 M335.8 194.7 L336.6 201.7" stroke="#f39a26" stroke-width="1.0" fill="none" stroke-dasharray="2.2 1.2"/><ellipse cx="331.4" cy="202.3" rx="2.1" ry="1.5" fill="#f39a26"/><ellipse cx="336.7" cy="202.9" rx="2.1" ry="1.5" fill="#f39a26"/><rect x="425.1" y="218.1" width="3.2" height="3.2" fill="none" stroke="#f39a26" stroke-width="0.9"/><line x1="428.7" y1="220.3" x2="435.7" y2="222.3" stroke="#f39a26" stroke-width="1.1" stroke-dasharray="3 1.4"/><path d="M426.7 221.3 L422.5 227.7 M426.7 221.3 L427.5 228.3" stroke="#f39a26" stroke-width="1.0" fill="none" stroke-dasharray="2.2 1.2"/><ellipse cx="422.3" cy="228.9" rx="2.1" ry="1.5" fill="#f39a26"/><ellipse cx="427.6" cy="229.5" rx="2.1" ry="1.5" fill="#f39a26"/><rect x="470.6" y="231.3" width="3.2" height="3.2" fill="none" stroke="#f39a26" stroke-width="0.9"/><line x1="474.2" y1="233.5" x2="481.2" y2="235.5" stroke="#f39a26" stroke-width="1.1" stroke-dasharray="3 1.4"/><path d="M472.2 234.5 L468.0 240.9 M472.2 234.5 L473.0 241.5" stroke="#f39a26" stroke-width="1.0" fill="none" stroke-dasharray="2.2 1.2"/><ellipse cx="467.8" cy="242.1" rx="2.1" ry="1.5" fill="#f39a26"/><ellipse cx="473.1" cy="242.7" rx="2.1" ry="1.5" fill="#f39a26"/><rect x="163.4" y="393.1" width="3.2" height="3.2" fill="none" stroke="#f39a26" stroke-width="0.9"/><line x1="167.0" y1="395.3" x2="174.0" y2="397.3" stroke="#f39a26" stroke-width="1.1" stroke-dasharray="3 1.4"/><path d="M165.0 396.3 L160.8 402.7 M165.0 396.3 L165.8 403.3" stroke="#f39a26" stroke-width="1.0" fill="none" stroke-dasharray="2.2 1.2"/><ellipse cx="160.6" cy="403.9" rx="2.1" ry="1.5" fill="#f39a26"/><ellipse cx="165.9" cy="404.5" rx="2.1" ry="1.5" fill="#f39a26"/><rect x="208.9" y="406.4" width="3.2" height="3.2" fill="none" stroke="#f39a26" stroke-width="0.9"/><line x1="212.5" y1="408.6" x2="219.5" y2="410.6" stroke="#f39a26" stroke-width="1.1" stroke-dasharray="3 1.4"/><path d="M210.5 409.6 L206.3 416.0 M210.5 409.6 L211.3 416.6" stroke="#f39a26" stroke-width="1.0" fill="none" stroke-dasharray="2.2 1.2"/><ellipse cx="206.1" cy="417.2" rx="2.1" ry="1.5" fill="#f39a26"/><ellipse cx="211.4" cy="417.8" rx="2.1" ry="1.5" fill="#f39a26"/><rect x="299.9" y="432.9" width="3.2" height="3.2" fill="none" stroke="#f39a26" stroke-width="0.9"/><line x1="303.5" y1="435.1" x2="310.5" y2="437.1" stroke="#f39a26" stroke-width="1.1" stroke-dasharray="3 1.4"/><path d="M301.5 436.1 L297.3 442.5 M301.5 436.1 L302.3 443.1" stroke="#f39a26" stroke-width="1.0" fill="none" stroke-dasharray="2.2 1.2"/><ellipse cx="297.1" cy="443.7" rx="2.1" ry="1.5" fill="#f39a26"/><ellipse cx="302.4" cy="444.3" rx="2.1" ry="1.5" fill="#f39a26"/><rect x="345.3" y="446.2" width="3.2" height="3.2" fill="none" stroke="#f39a26" stroke-width="0.9"/><line x1="348.9" y1="448.4" x2="355.9" y2="450.4" stroke="#f39a26" stroke-width="1.1" stroke-dasharray="3 1.4"/><path d="M346.9 449.4 L342.7 455.8 M346.9 449.4 L347.7 456.4" stroke="#f39a26" stroke-width="1.0" fill="none" stroke-dasharray="2.2 1.2"/><ellipse cx="342.5" cy="457.0" rx="2.1" ry="1.5" fill="#f39a26"/><ellipse cx="347.8" cy="457.6" rx="2.1" ry="1.5" fill="#f39a26"/><circle cx="166.6" cy="219.2" r="1.5" fill="#f01818"/><circle cx="127.4" cy="286.1" r="1.5" fill="#f01818"/><circle cx="205.6" cy="152.6" r="1.5" fill="#f01818"/><circle cx="506.7" cy="64.4" r="1.3" fill="#18e018"/><g font-size="7.05" font-weight="bold" fill="#056a1a"><text x="181.2" y="80.1" textLength="127.8" lengthAdjust="spacingAndGlyphs">Beam to column connection 2 - P50</text><text x="325.0" y="101.8" textLength="112.7" lengthAdjust="spacingAndGlyphs">Beam splice connection 2 - P24</text><text x="149.6" y="133.9" textLength="127.4" lengthAdjust="spacingAndGlyphs">Beam to column connection 1 - P13</text><text x="294.0" y="155.2" textLength="113.0" lengthAdjust="spacingAndGlyphs">Beam splice connection 1 - P21</text><text x="212.5" y="160.1" textLength="65.0" lengthAdjust="spacingAndGlyphs">Base plate 2 - P32</text><text x="453.6" y="159.9" textLength="127.4" lengthAdjust="spacingAndGlyphs">Beam to column connection 2 - P51</text><text x="257.8" y="173.2" textLength="65.2" lengthAdjust="spacingAndGlyphs">Base plate 6 - P45</text><text x="303.3" y="186.9" textLength="65.2" lengthAdjust="spacingAndGlyphs">Base plate 6 - P46</text><text x="118.6" y="187.2" textLength="127.4" lengthAdjust="spacingAndGlyphs">Beam to column connection 1 - P12</text><text x="262.3" y="208.6" textLength="112.5" lengthAdjust="spacingAndGlyphs">Beam splice connection 1 - P20</text><text x="181.0" y="213.6" textLength="65.5" lengthAdjust="spacingAndGlyphs">Base plate 1 - P10</text><text x="393.0" y="213.6" textLength="65.0" lengthAdjust="spacingAndGlyphs">Base plate 6 - P47</text><text x="422.0" y="213.6" textLength="128.0" lengthAdjust="spacingAndGlyphs">Beam to column connection 1 - P14</text><text x="439.5" y="227.1" textLength="65.2" lengthAdjust="spacingAndGlyphs">Base plate 6 - P48</text><text x="485.0" y="240.2" textLength="64.6" lengthAdjust="spacingAndGlyphs">Base plate 2 - P31</text><text x="87.0" y="240.6" textLength="128.0" lengthAdjust="spacingAndGlyphs">Beam to column connection 1 - P11</text><text x="230.7" y="262.2" textLength="113.0" lengthAdjust="spacingAndGlyphs">Beam splice connection 1 - P19</text><text x="390.6" y="266.6" textLength="128.0" lengthAdjust="spacingAndGlyphs">Beam to column connection 1 - P15</text><text x="152.3" y="267.2" textLength="60.4" lengthAdjust="spacingAndGlyphs">Base plate 1 - P9</text><text x="456.0" y="293.2" textLength="60.0" lengthAdjust="spacingAndGlyphs">Base plate 1 - P7</text><text x="53.6" y="293.9" textLength="131.9" lengthAdjust="spacingAndGlyphs">Beam to column connection 1 - P113</text><text x="199.0" y="315.8" textLength="112.6" lengthAdjust="spacingAndGlyphs">Beam splice connection 1 - P18</text><text x="358.5" y="320.2" textLength="128.0" lengthAdjust="spacingAndGlyphs">Beam to column connection 1 - P16</text><text x="121.0" y="320.8" textLength="60.0" lengthAdjust="spacingAndGlyphs">Base plate 1 - P8</text><text x="425.0" y="346.9" textLength="60.0" lengthAdjust="spacingAndGlyphs">Base plate 1 - P6</text><text x="22.5" y="348.1" textLength="131.5" lengthAdjust="spacingAndGlyphs">Beam to column connection 2 - P114</text><text x="145.6" y="353.6" textLength="84.4" lengthAdjust="spacingAndGlyphs">Beam splice plate - P95</text><text x="168.6" y="369.2" textLength="112.0" lengthAdjust="spacingAndGlyphs">Beam splice connection 2 - P23</text><text x="326.0" y="374.2" textLength="132.0" lengthAdjust="spacingAndGlyphs">Beam to column connection 1 - P112</text><text x="90.0" y="374.2" textLength="60.0" lengthAdjust="spacingAndGlyphs">Base plate 1 - P3</text><text x="133.0" y="387.6" textLength="64.0" lengthAdjust="spacingAndGlyphs">Base plate 4 - P61</text><text x="282.0" y="393.2" textLength="84.0" lengthAdjust="spacingAndGlyphs">Beam splice plate - P94</text><text x="178.0" y="400.9" textLength="64.6" lengthAdjust="spacingAndGlyphs">Base plate 4 - P62</text><text x="393.6" y="400.6" textLength="60.0" lengthAdjust="spacingAndGlyphs">Base plate 1 - P5</text><text x="269.0" y="427.1" textLength="64.6" lengthAdjust="spacingAndGlyphs">Base plate 4 - P63</text><text x="305.0" y="427.1" textLength="132.0" lengthAdjust="spacingAndGlyphs">Beam to column connection 1 - P110</text><text x="55.9" y="427.6" textLength="65.6" lengthAdjust="spacingAndGlyphs">Base plate 2 - P30</text><text x="314.0" y="440.4" textLength="64.6" lengthAdjust="spacingAndGlyphs">Base plate 4 - P64</text><text x="296.0" y="440.4" textLength="132.0" lengthAdjust="spacingAndGlyphs">Beam to column connection 1 - P111</text><text x="101.0" y="441.4" textLength="64.9" lengthAdjust="spacingAndGlyphs">Base plate 3 - P41</text><text x="146.6" y="454.4" textLength="65.4" lengthAdjust="spacingAndGlyphs">Base plate 4 - P60</text><text x="362.0" y="453.9" textLength="60.0" lengthAdjust="spacingAndGlyphs">Base plate 1 - P4</text><text x="237.6" y="480.6" textLength="64.4" lengthAdjust="spacingAndGlyphs">Base plate 4 - P59</text><text x="282.7" y="493.9" textLength="65.1" lengthAdjust="spacingAndGlyphs">Base plate 3 - P44</text><text x="328.3" y="507.2" textLength="64.7" lengthAdjust="spacingAndGlyphs">Base plate 2 - P29</text></g></svg>
</div>
</body></html>
